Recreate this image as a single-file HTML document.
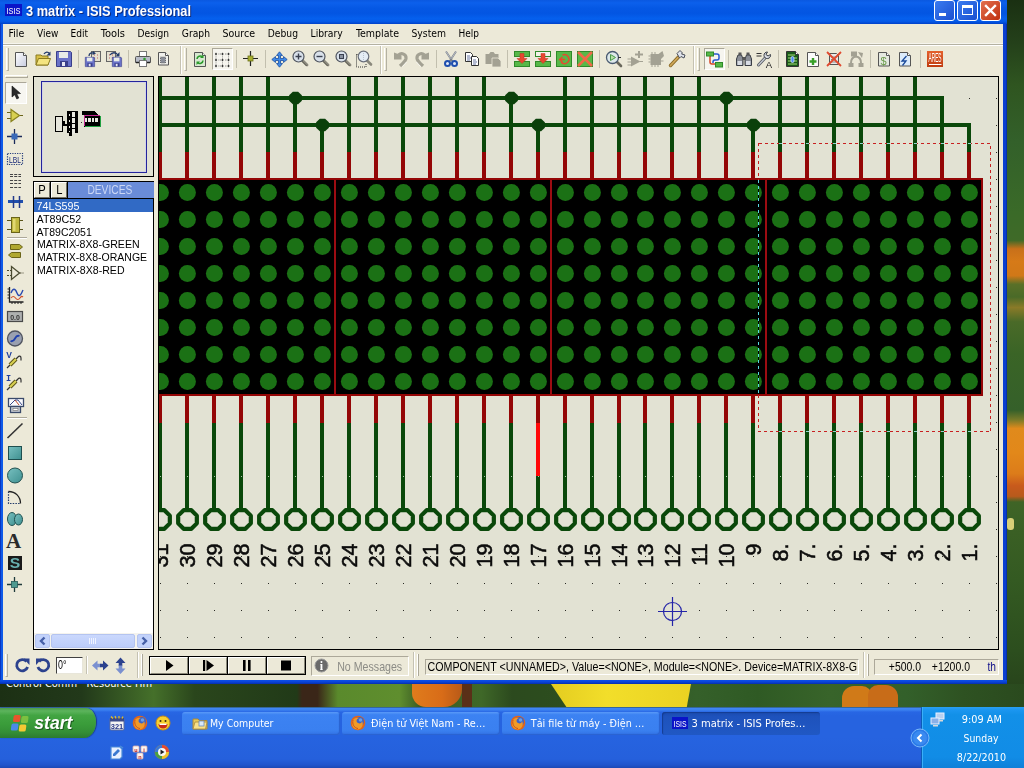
<!DOCTYPE html>
<html><head><meta charset="utf-8"><title>3 matrix - ISIS Professional</title>
<style>
html,body{margin:0;padding:0;}
body{width:1024px;height:768px;overflow:hidden;position:relative;background:#2b4a1b;font-family:"Liberation Sans","DejaVu Sans",sans-serif;font-size:11px;color:#000;}
.a{position:absolute;}
.t{position:absolute;white-space:nowrap;line-height:1;}
svg{position:absolute;overflow:visible;will-change:transform;}
.tah{font-family:"DejaVu Sans Condensed","DejaVu Sans","Liberation Sans",sans-serif;}
.sunk{border:1px solid;border-color:#aca899 #fff #fff #aca899;box-sizing:border-box;}
.rais{border:1px solid;border-color:#fff #716f64 #716f64 #fff;box-sizing:border-box;}
.tsep{position:absolute;width:1px;background:#c2bfae;top:50px;height:18px;}
.grip{position:absolute;width:3px;box-sizing:border-box;border-left:1px solid #fff;border-right:1px solid #b4b1a2;border-bottom:1px solid #b4b1a2;top:48px;height:23px;}
</style></head><body>

<div class="a" id="wall-r" style="left:1007px;top:0;width:17px;height:707px;background:linear-gradient(to bottom,#1a3012 0%,#24401a 6%,#2f5520 12%,#33602a 20%,#3a6a28 30%,#3f6a28 34%,#c8701a 35.200%,#d67a18 37%,#d07818 39%,#5a7028 40.200%,#4a6a28 42%,#8a7a28 43.500%,#4a6a28 45.500%,#3a6426 50%,#35602a 58%,#7a7a28 59.400%,#e08a1c 60.600%,#e2881a 64%,#dc7c1a 67%,#c85a1c 68.700%,#b85a1c 70.200%,#3f6426 71%,#3c6226 73.200%,#3a5f24 75.400%,#345a22 82%,#2c4e1e 92%,#263f1a 100%);"></div>
<div class="a" style="left:1007px;top:518px;width:7px;height:12px;background:#d8d078;border-radius:3px;"></div>
<div class="a" id="wall-b" style="left:0;top:684px;width:1024px;height:23px;background:linear-gradient(to right,#1c3014 0%,#22391a 8%,#45702a 15%,#2a461c 19%,#213a18 29%,#3a2618 29.500%,#3a2618 31%,#5a8a2c 33%,#5f8e2e 39%,#3a5c24 41%,#3f6828 47%,#2c4a1e 50%,#2c4c1e 53%,#2f5222 60%,#35602a 68%,#2f5a24 74%,#38642a 81%,#33602a 88.500%,#2e5222 94%,#2a4a1e 100%);"></div>
<div class="a" style="left:551px;top:684px;width:140px;height:23px;background:linear-gradient(to right,#e4cc20,#f2de2a 40%,#ead222 100%);clip-path:polygon(0 0,100% 0,97% 100%,11% 100%);"></div>
<div class="a" style="left:842px;top:686px;width:30px;height:21px;background:#d07a18;border-radius:12px 10px 0 0;"></div>
<div class="a" style="left:868px;top:685px;width:30px;height:22px;background:#c86c18;border-radius:10px 12px 0 0;"></div>
<div class="a" style="left:412px;top:684px;width:50px;height:23px;background:linear-gradient(to right,#e07c1c,#d86c18 60%,#b85a18);border-radius:0 0 18px 14px;"></div>
<div class="a" style="left:462px;top:684px;width:10px;height:23px;background:#5a3018;"></div>
<div class="a" style="left:0;top:684px;width:160px;height:3px;overflow:hidden;"><div class="t tah" style="left:6px;top:-6px;font-size:11px;color:#fff;">Control Comm&nbsp;&nbsp; Resource Hm</div></div>
<div class="a" id="win" style="left:0;top:0;width:1007px;height:684px;background:#0a3fd0;"></div>
<div class="a" style="left:0;top:23px;width:1px;height:661px;background:#0a36c0;"></div>
<div class="a" style="left:1px;top:23px;width:2px;height:659px;background:#0f5ae8;"></div>
<div class="a" style="left:1006px;top:23px;width:1px;height:661px;background:#062fae;"></div>
<div class="a" style="left:0;top:680px;width:1007px;height:4px;background:linear-gradient(to bottom,#0b50ea,#0a44d8 50%,#062fae);"></div>
<div class="a" id="client" style="left:3px;top:24px;width:1000px;height:656px;background:#ece9d8;"></div>
<div class="a" id="title" style="left:0;top:0;width:1007px;height:24px;background:linear-gradient(to bottom,#0a58e0 0%,#0c60ec 12%,#0558e4 35%,#0355e2 55%,#0560ee 78%,#0458e6 90%,#0040c8 100%);"></div>
<div class="a" style="left:5px;top:4px;width:17px;height:12px;background:#0a14c8;"></div>
<svg style="left:5px;top:4px" width="17" height="12" viewBox="0 0 17 12"><text x="1.500" y="10" font-size="9.500" font-family="Liberation Sans, sans-serif" fill="#fff" textLength="14" lengthAdjust="spacingAndGlyphs">ISIS</text></svg>
<div class="a" style="left:934px;top:0px;width:21px;height:21px;box-sizing:border-box;border:1px solid #fff;border-radius:3px;background:linear-gradient(135deg,#3a7bf0,#1a4fd0);"></div>
<svg style="left:934px;top:0px" width="21" height="21" viewBox="0 0 21 21"><rect x="5" y="13" width="7" height="3" fill="#fff"/></svg>
<div class="a" style="left:957px;top:0px;width:21px;height:21px;box-sizing:border-box;border:1px solid #fff;border-radius:3px;background:linear-gradient(135deg,#3a7bf0,#1a4fd0);"></div>
<svg style="left:957px;top:0px" width="21" height="21" viewBox="0 0 21 21"><rect x="5.5" y="6.5" width="10" height="8" fill="none" stroke="#fff" stroke-width="1"/><rect x="5" y="5" width="11" height="3" fill="#fff"/></svg>
<div class="a" style="left:980px;top:0px;width:21px;height:21px;box-sizing:border-box;border:1px solid #fff;border-radius:3px;background:linear-gradient(135deg,#e27050,#c0300e);"></div>
<svg style="left:980px;top:0px" width="21" height="21" viewBox="0 0 21 21"><path d="M6 6L15 15M15 6L6 15" stroke="#fff" stroke-width="2.4" stroke-linecap="square"/></svg>
<div class="a" style="left:3px;top:43px;width:1000px;height:1px;background:#f6f5ee;"></div>
<div class="a" style="left:3px;top:44px;width:1000px;height:1px;background:#b4b1a2;"></div>
<div class="a" style="left:3px;top:45px;width:1000px;height:1px;background:#fff;"></div>
<div class="grip" style="left:6px"></div>
<svg style="left:13px;top:51px" width="16" height="16" viewBox="0 0 16 16"><defs><linearGradient id="gnew" x1="0" y1="0" x2="1" y2="1"><stop offset="0" stop-color="#fff"/><stop offset="1" stop-color="#c8cce0"/></linearGradient></defs><path d="M2.500 1.500h8l3 3v11h-11z" fill="url(#gnew)" stroke="#555" stroke-width="1"/><path d="M10.500 1.500v3h3" fill="#fff" stroke="#555" stroke-width="1"/></svg>
<svg style="left:35px;top:50px" width="16" height="16" viewBox="0 0 16 16"><path d="M1 5h5l1 1h6v9H1z" fill="#d8c048" stroke="#8a7a20" stroke-width="1"/><path d="M3.500 8.500h12l-2.500 6.500H1z" fill="#f4e480" stroke="#8a7a20" stroke-width="1"/><path d="M9 4c1.500-2.500 4-2.500 5.500-0.500" fill="none" stroke="#223a6a" stroke-width="1.300"/><path d="M15.500 1.500v4h-4z" fill="#223a6a"/></svg>
<svg style="left:56px;top:51px" width="16" height="16" viewBox="0 0 16 16"><path d="M0.500 0.500h14l1 1v14h-15z" fill="#6a72c8" stroke="#3a3f8a" stroke-width="1"/><rect x="3" y="1" width="9" height="6" fill="#e8ece8"/><rect x="4" y="10" width="8" height="5.500" fill="#3a3f8a"/><rect x="6" y="11" width="3" height="4" fill="#e8e8f4"/></svg>
<div class="tsep" style="left:78px"></div>
<svg style="left:85px;top:51px" width="16" height="16" viewBox="0 0 16 16"><rect x="6.500" y="0.500" width="9" height="10" fill="#e4e0d0" stroke="#666" stroke-width="1"/><path d="M9 4h1M12 4h1M9 7h1M12 7h1" stroke="#c06060" stroke-width="1"/><g transform="translate(0,6) scale(0.62)"><path d="M0.500 0.500h14l1 1v14h-15z" fill="#6a72c8" stroke="#3a3f8a" stroke-width="1"/><rect x="3" y="1" width="9" height="6" fill="#e8ece8"/><rect x="4" y="10" width="8" height="5.500" fill="#3a3f8a"/><rect x="6" y="11" width="3" height="4" fill="#e8e8f4"/></g><path d="M4 5c0-3 3-3.500 5-3" fill="none" stroke="#223a6a" stroke-width="1.300"/><path d="M8 0l3 2.500l-3.500 1.500z" fill="#223a6a"/></svg>
<svg style="left:106px;top:51px" width="16" height="16" viewBox="0 0 16 16"><rect x="0.500" y="0.500" width="9" height="10" fill="#e4e0d0" stroke="#666" stroke-width="1"/><path d="M3 4h1M6 4h1M3 7h1M6 7h1" stroke="#c06060" stroke-width="1"/><g transform="translate(6,6) scale(0.62)"><path d="M0.500 0.500h14l1 1v14h-15z" fill="#6a72c8" stroke="#3a3f8a" stroke-width="1"/><rect x="3" y="1" width="9" height="6" fill="#e8ece8"/><rect x="4" y="10" width="8" height="5.500" fill="#3a3f8a"/><rect x="6" y="11" width="3" height="4" fill="#e8e8f4"/></g><path d="M4 4c2-3 6-3 8 0" fill="none" stroke="#223a6a" stroke-width="1.300"/><path d="M13.500 1v4.500h-4z" fill="#223a6a"/></svg>
<div class="tsep" style="left:128px"></div>
<svg style="left:135px;top:51px" width="16" height="16" viewBox="0 0 16 16"><rect x="4.500" y="0.500" width="7" height="5" fill="#fff" stroke="#777" stroke-width="1"/><path d="M1.500 5.500h13a1 1 0 0 1 1 1v5h-15v-5a1 1 0 0 1 1-1z" fill="#b8bcc8" stroke="#555" stroke-width="1"/><rect x="4.500" y="9.500" width="7" height="6" fill="#fff" stroke="#777" stroke-width="1"/><path d="M1 11.500h3M12 11.500h3" stroke="#222" stroke-width="1.500"/><circle cx="9.500" cy="8" r="1.300" fill="#30a030"/></svg>
<svg style="left:156px;top:51px" width="16" height="16" viewBox="0 0 16 16"><path d="M2.500 1.500h7l3 3v9.500h-10z" fill="#f0f0ec" stroke="#555" stroke-width="1"/><path d="M9.500 1.500v3h3" fill="#fff" stroke="#555" stroke-width="1"/><rect x="4.500" y="6" width="5" height="6" fill="#8a8e98"/><path d="M4.500 6h5v6h-5z" fill="none" stroke="#555" stroke-width="0.800" stroke-dasharray="1 1"/></svg>
<div class="a" style="left:180px;top:46px;width:1px;height:28px;background:#c5c2b2;border-right:1px solid #fff;"></div>
<div class="grip" style="left:184px"></div>
<svg style="left:192px;top:51px" width="16" height="16" viewBox="0 0 16 16"><path d="M2.500 1.500h8l3 3v11h-11z" fill="#d8e8d0" stroke="#555" stroke-width="1"/><path d="M10.500 1.500v3h3" fill="#fff" stroke="#555" stroke-width="1"/><path d="M5 8a3.200 3.200 0 0 1 5.500-2" fill="none" stroke="#2a9a2a" stroke-width="1.600"/><path d="M11.500 3.500v3.500h-3.500z" fill="#2a9a2a"/><path d="M11 9.500a3.200 3.200 0 0 1-5.500 2" fill="none" stroke="#2a9a2a" stroke-width="1.600"/><path d="M4.500 14v-3.500h3.500z" fill="#2a9a2a"/></svg>
<div class="a" style="left:212px;top:48px;width:21px;height:22px;box-sizing:border-box;background:#f6f5ef;border:1px solid;border-color:#aca899 #fff #fff #aca899;"></div>
<svg style="left:214px;top:51px" width="17" height="17" viewBox="0 0 17 17"><g fill="#333"><path d="M2 1.5l1.200 1.500l-1.200 1.500l-1.200-1.500z"/><path d="M2 7.5l1.200 1.500l-1.200 1.500l-1.200-1.500z"/><path d="M2 13.5l1.200 1.500l-1.200 1.500l-1.200-1.500z"/><path d="M8.5 1.5l1.200 1.500l-1.200 1.500l-1.200-1.500z"/><path d="M8.5 7.5l1.200 1.500l-1.200 1.500l-1.200-1.500z"/><path d="M8.5 13.5l1.200 1.500l-1.200 1.500l-1.200-1.500z"/><path d="M14.5 1.5l1.200 1.500l-1.200 1.500l-1.200-1.500z"/><path d="M14.5 7.5l1.200 1.500l-1.200 1.500l-1.200-1.500z"/><path d="M14.5 13.5l1.200 1.500l-1.200 1.500l-1.200-1.500z"/></g><path d="M4.500 3h2.500M11 3h2M4.500 9h2.500M11 9h2M4.500 15h2.500M11 15h2M2 5.500v2M2 11.500v2M8.500 5.500v2M8.500 11.500v2M14.500 5.500v2M14.500 11.500v2" stroke="#555" stroke-width="0.800" stroke-dasharray="0.800 0.800"/></svg>
<div class="tsep" style="left:236px"></div>
<svg style="left:242px;top:50px" width="17" height="17" viewBox="0 0 17 17"><path d="M8.500 1v15M1 8.500h15" stroke="#222" stroke-width="1.200"/><rect x="6" y="6" width="5" height="5" fill="#a8b030" stroke="#6a7018" stroke-width="0.800"/></svg>
<div class="tsep" style="left:265px"></div>
<svg style="left:271px;top:51px" width="17" height="17" viewBox="0 0 17 17"><path d="M8.500 0.800L11.500 4.500H9.500V7.500H12.500V5.500L16.200 8.500L12.500 11.500V9.500H9.500V12.500H11.500L8.500 16.200L5.500 12.500H7.500V9.500H4.500V11.500L0.800 8.500L4.500 5.500V7.500H7.500V4.500H5.500Z" fill="#3f8ae8" stroke="#1d4f9e" stroke-width="0.800" stroke-linejoin="round"/></svg>
<svg style="left:292px;top:50px" width="16" height="16" viewBox="0 0 16 16"><path d="M10 10l5 5" stroke="#8a887c" stroke-width="2.800" stroke-linecap="round"/><path d="M10 10l5 5" stroke="#55534a" stroke-width="1" stroke-linecap="round" transform="translate(-0.700,0.700)"/><circle cx="6.500" cy="6.500" r="5.500" fill="#d8e0ea" stroke="#50555f" stroke-width="1.200"/><path d="M3.500 6.500h6M6.500 3.500v6" stroke="#3a4050" stroke-width="1.400"/></svg>
<svg style="left:313px;top:50px" width="16" height="16" viewBox="0 0 16 16"><path d="M10 10l5 5" stroke="#8a887c" stroke-width="2.800" stroke-linecap="round"/><path d="M10 10l5 5" stroke="#55534a" stroke-width="1" stroke-linecap="round" transform="translate(-0.700,0.700)"/><circle cx="6.500" cy="6.500" r="5.500" fill="#d8e0ea" stroke="#50555f" stroke-width="1.200"/><path d="M3.500 6.500h6" stroke="#3a4050" stroke-width="1.400"/></svg>
<svg style="left:335px;top:50px" width="16" height="16" viewBox="0 0 16 16"><path d="M10 10l5 5" stroke="#8a887c" stroke-width="2.800" stroke-linecap="round"/><path d="M10 10l5 5" stroke="#55534a" stroke-width="1" stroke-linecap="round" transform="translate(-0.700,0.700)"/><circle cx="6.500" cy="6.500" r="5.500" fill="#d8e0ea" stroke="#50555f" stroke-width="1.200"/><rect x="4.500" y="4.500" width="4" height="4" fill="#8a92a0" stroke="#3a4050" stroke-width="1"/></svg>
<svg style="left:355px;top:50px" width="18" height="18" viewBox="0 0 18 18"><path d="M1.500 4.500v12.500h9.500v-4" fill="none" stroke="#333" stroke-width="1" stroke-dasharray="1 1"/><path d="M1.500 4.500h2.500" fill="none" stroke="#333" stroke-width="1" stroke-dasharray="1 1"/><path d="M12 10.500l4 4" stroke="#8a887c" stroke-width="2.600" stroke-linecap="round"/><circle cx="8.500" cy="6.500" r="5.300" fill="#e4ecf4" stroke="#6a6f7a" stroke-width="1.200"/><path d="M8.500 3v7" stroke="#b8c0cc" stroke-width="1" stroke-dasharray="1 1"/></svg>
<div class="a" style="left:380px;top:46px;width:1px;height:28px;background:#c5c2b2;border-right:1px solid #fff;"></div>
<div class="grip" style="left:384px"></div>
<svg style="left:393px;top:51px" width="16" height="16" viewBox="0 0 16 16"><path d="M1 1.500V8.500H8.500V4.500L5 3z" fill="#a3a193"/><path d="M5.500 4C8.500 1.500 13.500 3 13 7.500C12.500 10.500 10 12 7 15" fill="none" stroke="#a3a193" stroke-width="3.200"/><path d="M9.500 15.500l4-4.500" stroke="#fff" stroke-width="1" opacity="0.700"/></svg>
<svg style="left:414px;top:51px" width="16" height="16" viewBox="0 0 16 16"><g transform="translate(16,0) scale(-1,1)"><path d="M1 1.500V8.500H8.500V4.500L5 3z" fill="#a3a193"/><path d="M5.500 4C8.500 1.500 13.500 3 13 7.500C12.500 10.500 10 12 7 15" fill="none" stroke="#a3a193" stroke-width="3.200"/><path d="M9.500 15.500l4-4.500" stroke="#fff" stroke-width="1" opacity="0.700"/></g></svg>
<div class="tsep" style="left:436px"></div>
<svg style="left:443px;top:51px" width="16" height="16" viewBox="0 0 16 16"><path d="M3 0.500l6.500 10M13 0.500l-6.500 10" stroke="#7a8088" stroke-width="1.800"/><path d="M3 0.500l4.500 7M13 0.500l-4.500 7" stroke="#c8ccd4" stroke-width="0.800"/><circle cx="4.500" cy="12.500" r="2.500" fill="#dfe8f8" stroke="#1f4fae" stroke-width="2"/><circle cx="11.500" cy="12.500" r="2.500" fill="#dfe8f8" stroke="#1f4fae" stroke-width="2"/></svg>
<svg style="left:464px;top:51px" width="16" height="16" viewBox="0 0 16 16"><path d="M1.500 1.500h5l2 2v7h-7z" fill="#fff" stroke="#333" stroke-width="1"/><path d="M3 5h3M3 7h4M3 9h3" stroke="#5a6a9a" stroke-width="0.900"/><path d="M7.500 5.500h5l2 2v7h-7z" fill="#fff" stroke="#333" stroke-width="1"/><path d="M9 9h3M9 11h4M9 13h3" stroke="#5a6a9a" stroke-width="0.900"/></svg>
<svg style="left:485px;top:51px" width="16" height="16" viewBox="0 0 16 16"><path d="M0.500 3h3.500l1.500-2h3l1.500 2h3.500v10h-13z" fill="#a3a193"/><path d="M7 7h6l3 3v6h-9z" fill="#a3a193" stroke="#ece9d8" stroke-width="0.800"/></svg>
<div class="tsep" style="left:507px"></div>
<svg style="left:514px;top:51px" width="16" height="16" viewBox="0 0 16 16"><rect x="0.500" y="0.500" width="15" height="5" fill="#58b848" stroke="#2f8a2a"/><rect x="0.500" y="10.500" width="15" height="5" fill="#58b848" stroke="#2f8a2a"/><path d="M6 2.500h4v5h3l-5 5l-5-5h3z" fill="#e84830" stroke="#c03020" stroke-width="0.500"/></svg>
<svg style="left:535px;top:51px" width="16" height="16" viewBox="0 0 16 16"><rect x="0.500" y="0.500" width="15" height="5" fill="#f4f2e8" stroke="#2f8a2a"/><rect x="0.500" y="10.500" width="15" height="5" fill="#58b848" stroke="#2f8a2a"/><path d="M6 2.500h4v5h3l-5 5l-5-5h3z" fill="#e84830" stroke="#c03020" stroke-width="0.500"/></svg>
<svg style="left:556px;top:51px" width="16" height="16" viewBox="0 0 16 16"><rect x="0.500" y="0.500" width="15" height="15" fill="#58b848" stroke="#2f8a2a"/><path d="M6.500 4a4.500 4.500 0 1 1-1.500 7" fill="none" stroke="#e84830" stroke-width="1.400"/><path d="M3 8.500h6M6.500 6l-3 2.500l3 2.500" fill="none" stroke="#e84830" stroke-width="1.300"/></svg>
<svg style="left:577px;top:51px" width="16" height="16" viewBox="0 0 16 16"><rect x="0.500" y="0.500" width="15" height="15" fill="#58b848" stroke="#2f8a2a"/><path d="M1 1l14 14M15 1l-14 14" stroke="#f06848" stroke-width="2.600"/></svg>
<div class="tsep" style="left:599px"></div>
<svg style="left:605px;top:50px" width="18" height="18" viewBox="0 0 18 18"><path d="M11 11l5 5" stroke="#6a685c" stroke-width="2.600" stroke-linecap="round"/><circle cx="7.500" cy="7.500" r="6" fill="#dde8ea" stroke="#4a5a70" stroke-width="1.300"/><path d="M5.500 4.500v6l5-3z" fill="#b8e0a8" stroke="#4a9a4a" stroke-width="1"/><path d="M13 7.500h3" stroke="#333" stroke-width="1"/></svg>
<svg style="left:627px;top:51px" width="16" height="16" viewBox="0 0 16 16"><path d="M4 5.500v10l9.500-5z" fill="#a3a193"/><path d="M0.500 8h3.500M0.500 11h3.500M0.500 14h3.500M13 10.500h3" stroke="#a3a193" stroke-width="1"/><path d="M8 3.500h8M12 0v7" stroke="#a3a193" stroke-width="2"/></svg>
<svg style="left:648px;top:51px" width="16" height="16" viewBox="0 0 16 16"><path d="M2.500 3h8l4-3l1.500 5l-3 3v6h-10.500z" fill="#a3a193"/><path d="M0.500 5h2M0.500 8h2M0.500 11h2M13 10h2.500M4 14v2M7 14v2M10 14v2M4 1v2M7 1v2" stroke="#a3a193" stroke-width="1"/></svg>
<svg style="left:669px;top:50px" width="17" height="17" viewBox="0 0 17 17"><path d="M1.500 15.500l8-8.500" stroke="#8a6a28" stroke-width="3.400" stroke-linecap="round"/><path d="M1.500 15.500l8-8.500" stroke="#d0a858" stroke-width="1.800" stroke-linecap="round"/><path d="M8 3.500l3-3l2.500 2.500l-1 1l3.500 1l-1 3l-3-1.500l-1.500 1.500z" fill="#e0e4ec" stroke="#4a4f5a" stroke-width="1"/></svg>
<div class="a" style="left:693px;top:46px;width:1px;height:28px;background:#c5c2b2;border-right:1px solid #fff;"></div>
<div class="grip" style="left:697px"></div>
<div class="a" style="left:704px;top:48px;width:21px;height:22px;box-sizing:border-box;background:#f6f5ef;border:1px solid;border-color:#aca899 #fff #fff #aca899;"></div>
<svg style="left:706px;top:51px" width="18" height="17" viewBox="0 0 18 17"><path d="M8 3h3a2 2 0 0 1 2 2v2a2 2 0 0 1-2 2H9a2 2 0 0 0-2 2v1" fill="none" stroke="#2a5ad0" stroke-width="1.500"/><path d="M8 4H6a2 2 0 0 0-2 2v5a2 2 0 0 0 2 2h4" fill="none" stroke="#d84828" stroke-width="1.500"/><rect x="0.500" y="1" width="7" height="4" fill="#58b848" stroke="#2f8a2a"/><rect x="9.500" y="11.500" width="7" height="4.500" fill="#58b848" stroke="#2f8a2a"/></svg>
<div class="tsep" style="left:728px"></div>
<svg style="left:736px;top:51px" width="16" height="16" viewBox="0 0 16 16"><path d="M2 4h3.500l1.500 4v6.500H0.500V8z" fill="#8a8e96" stroke="#3a3e46" stroke-width="1"/><path d="M10.500 4H14l1.500 4v6.500H9V8z" fill="#8a8e96" stroke="#3a3e46" stroke-width="1"/><rect x="2.500" y="1.500" width="3" height="2.500" fill="#555" /><rect x="10.500" y="1.500" width="3" height="2.500" fill="#555"/><rect x="6.500" y="6" width="3" height="3" fill="#555"/><rect x="1.500" y="10" width="4.500" height="4" fill="#d8dce4"/><rect x="10" y="10" width="4.500" height="4" fill="#d8dce4"/></svg>
<svg style="left:756px;top:51px" width="17" height="17" viewBox="0 0 17 17"><path d="M0.500 2.500h5M0.500 5h5" stroke="#333" stroke-width="1.200"/><path d="M2.500 14l8-8.500" stroke="#555a62" stroke-width="3" stroke-linecap="round"/><path d="M2.500 14l8-8.500" stroke="#c8ccd4" stroke-width="1.200" stroke-linecap="round"/><path d="M14.500 3.500a3.300 3.300 0 1 1-3-2.500l-1.500 2.500l2 1.500z" fill="#d8dce4" stroke="#3a3e46" stroke-width="1"/><text x="13" y="16.500" font-size="9.500" font-family="Liberation Sans, sans-serif" text-anchor="middle" fill="#222">A</text></svg>
<div class="tsep" style="left:778px"></div>
<svg style="left:785px;top:51px" width="16" height="16" viewBox="0 0 16 16"><path d="M1.500 0.500h9l3 3v12h-12z" fill="#1a5a1a" stroke="#333" stroke-width="1"/><path d="M10.500 0.500v3h3" fill="#fff" stroke="#333" stroke-width="1"/><path d="M3 4h7M3 7h9M3 10h9M3 13h9" stroke="#a8e078" stroke-width="1.200"/><rect x="6" y="5.500" width="3" height="6" rx="1.500" fill="#4a8af0" stroke="#cfe0ff" stroke-width="0.800"/></svg>
<svg style="left:805px;top:51px" width="16" height="16" viewBox="0 0 16 16"><path d="M2.500 1.500h8l3 3v11h-11z" fill="#fbfbfb" stroke="#555" stroke-width="1"/><path d="M10.500 1.500v3h3" fill="#fff" stroke="#555" stroke-width="1"/><path d="M4.500 10.500h7M8 7v7" stroke="#38a028" stroke-width="2.400"/></svg>
<svg style="left:826px;top:51px" width="17" height="17" viewBox="0 0 17 17"><path d="M3.500 2.500h7l2 2v9h-9z" fill="#e8e8e8" stroke="#555" stroke-width="1"/><path d="M5 6h5M5 8.500h5M5 11h5" stroke="#888" stroke-width="1"/><path d="M1 1l14 14M15 1l-14 14" stroke="#e04a30" stroke-width="1.800"/></svg>
<svg style="left:848px;top:51px" width="16" height="16" viewBox="0 0 16 16"><rect x="3" y="0.500" width="6" height="5" fill="#a3a193"/><rect x="0.500" y="12" width="5" height="4" fill="#a3a193"/><rect x="10.500" y="12" width="5" height="4" fill="#a3a193"/><path d="M3 12c0-4 2-6 5-6.500M8 5.500c3 0.500 5 2.500 5 6.500" fill="none" stroke="#a3a193" stroke-width="2"/><path d="M10 1l5 1l-1 5z" fill="#a3a193"/></svg>
<div class="tsep" style="left:870px"></div>
<svg style="left:876px;top:51px" width="16" height="16" viewBox="0 0 16 16"><path d="M2.500 1.500h8l3 3v10.500h-11z" fill="#e4e8e0" stroke="#555" stroke-width="1"/><path d="M10.500 1.500v3h3" fill="#fff" stroke="#555" stroke-width="1"/><text x="7.500" y="13.500" font-size="11" font-family="Liberation Sans, sans-serif" text-anchor="middle" fill="#6a9a4a">$</text></svg>
<svg style="left:897px;top:51px" width="16" height="16" viewBox="0 0 16 16"><path d="M2.500 1.500h8l3 3v10.500h-11z" fill="#dcecfc" stroke="#555" stroke-width="1"/><path d="M10.500 1.500v3h3" fill="#fff" stroke="#555" stroke-width="1"/><path d="M9.500 5l-4.500 5h4l-3.500 4.500" fill="none" stroke="#1a4a9a" stroke-width="1.300"/></svg>
<div class="tsep" style="left:920px"></div>
<svg style="left:927px;top:51px" width="16" height="16" viewBox="0 0 16 16"><defs><linearGradient id="gares" x1="0" y1="0" x2="0" y2="1"><stop offset="0" stop-color="#e4602c"/><stop offset="1" stop-color="#c03c10"/></linearGradient></defs><rect x="0" y="0" width="16" height="16" fill="url(#gares)"/><text transform="translate(1.500,11) scale(1,1.600)" x="0" y="0" font-size="8" font-family="Liberation Sans, sans-serif" fill="#fff" textLength="13" lengthAdjust="spacingAndGlyphs">ARES</text><path d="M2 13.500h12.500" fill="none" stroke="#fff" stroke-width="1"/></svg>
<div class="a" style="left:5px;top:75px;width:23px;height:2px;border:1px solid;border-color:#fff #aca899 #aca899 #fff;box-sizing:border-box;height:3px;"></div>
<div class="a" style="left:5px;top:82px;width:22px;height:22px;box-sizing:border-box;background:#f7f6f1;border:1px solid;border-color:#aca899 #fff #fff #aca899;"></div>
<svg style="left:6px;top:83px" width="18" height="18" viewBox="0 0 18 18"><path d="M6 3v11l2.800-2.300l2 4.300l2-1l-2-4.200l3.700-0.300z" fill="#2a2a2a" stroke="#111" stroke-width="0.600"/></svg>
<svg style="left:6px;top:106px" width="18" height="18" viewBox="0 0 18 18"><path d="M1 6.500h4M1 12.500h4M13 9.500h4" stroke="#6a6418" stroke-width="1.200"/><path d="M5 3.500v12l8.500-6z" fill="#d8d050" stroke="#8a8420" stroke-width="1.200"/></svg>
<svg style="left:6px;top:128px" width="18" height="18" viewBox="0 0 18 18"><path d="M8.500 1v15M1 8.500h15" stroke="#1a2a5a" stroke-width="1.300"/><rect x="5.500" y="5.500" width="6" height="6" fill="#3a6ab8"/></svg>
<svg style="left:6px;top:150px" width="18" height="18" viewBox="0 0 18 18"><rect x="1.500" y="3.500" width="15" height="11" fill="none" stroke="#223a7a" stroke-width="1.200" stroke-dasharray="1.200 1.200"/><text x="9" y="13" font-size="9.500" font-family="Liberation Sans, sans-serif" text-anchor="middle" fill="#1a2a7a" textLength="12" lengthAdjust="spacingAndGlyphs">LBL</text></svg>
<svg style="left:6px;top:171px" width="18" height="18" viewBox="0 0 18 18"><path d="M4 3.500h11M4 5.500h11M4 9.500h11M4 12.500h11M4 16.500h11" stroke="#444" stroke-width="1.200" stroke-dasharray="3 1.200"/></svg>
<svg style="left:6px;top:194px" width="18" height="18" viewBox="0 0 18 18"><path d="M2 7.500h15" stroke="#1f4fae" stroke-width="3"/><path d="M7.500 2v12M13.500 2v12" stroke="#223a8a" stroke-width="1.500"/></svg>
<svg style="left:6px;top:216px" width="18" height="18" viewBox="0 0 18 18"><path d="M1 4.500h16M1 13.500h16" stroke="#5a5418" stroke-width="1.200"/><rect x="5.500" y="1.500" width="8" height="15" fill="#c0b840" stroke="#6a6418" stroke-width="1"/><rect x="7" y="3" width="2.500" height="12" fill="#e0d870"/></svg>
<div class="a" style="left:7px;top:237px;width:20px;height:1px;background:#aca899;border-bottom:1px solid #fff;"></div>
<svg style="left:6px;top:241px" width="18" height="18" viewBox="0 0 18 18"><path d="M4.500 3.500h9l3 2.500l-3 2.500h-9z" fill="#b0a830" stroke="#6a6418" stroke-width="1"/><path d="M14.500 11.500h-9l-3 2.500l3 2.500h9z" fill="#b0a830" stroke="#6a6418" stroke-width="1"/></svg>
<svg style="left:6px;top:263px" width="18" height="18" viewBox="0 0 18 18"><path d="M5.500 3.500v13l8-6.500z" fill="none" stroke="#4a4a30" stroke-width="1.300"/><path d="M1 7.500h4.500M1 12.500h4.500M13.500 10h4" stroke="#4a4a30" stroke-width="1.200" stroke-dasharray="2 1"/></svg>
<svg style="left:6px;top:286px" width="19" height="19" viewBox="0 0 19 19"><path d="M3.500 1v15h14" fill="none" stroke="#222" stroke-width="1.300"/><path d="M1.500 3h2M1.500 6h2M1.500 9h2M1.500 12h2M6 16v2M9 16v2M12 16v2M15 16v2" stroke="#222" stroke-width="1"/><path d="M5 7c2-5 4-5 6 0s4 2 6-3" fill="none" stroke="#2a4ab0" stroke-width="1.400"/><path d="M5 12c1.500-2 3-2 4.500 0s3 2 4.500 0s2-2 3-1" fill="none" stroke="#d0502a" stroke-width="1.200"/></svg>
<svg style="left:6px;top:308px" width="18" height="18" viewBox="0 0 18 18"><rect x="1.500" y="3.500" width="15" height="10" fill="#aeb0b0" stroke="#4a4a4a" stroke-width="1.200"/><text x="9" y="11.500" font-size="7" font-weight="bold" font-family="Liberation Sans, sans-serif" text-anchor="middle" fill="#333">0.0</text></svg>
<svg style="left:6px;top:329px" width="19" height="19" viewBox="0 0 19 19"><circle cx="9" cy="9.500" r="7.500" fill="#9aa0b0" stroke="#50545f" stroke-width="1.300"/><path d="M4.500 12c2.500 1 3.500-0.500 4.500-2.500s2-3.500 4.500-2.500" fill="none" stroke="#1f3fae" stroke-width="1.800"/></svg>
<svg style="left:5px;top:351px" width="19" height="19" viewBox="0 0 19 19"><path d="M2 17l3-3" stroke="#333" stroke-width="1.200"/><path d="M5 14l6-6" stroke="#5a5418" stroke-width="4" stroke-linecap="butt"/><path d="M5 14l6-6" stroke="#d8d050" stroke-width="2.200"/><path d="M11 8l2-2c1-1.500 3-1 3 1v2.500" fill="none" stroke="#333" stroke-width="1.200"/><text x="4" y="7" font-size="8.500" font-weight="bold" font-family="Liberation Sans, sans-serif" text-anchor="middle" fill="#1f3f9e">V</text></svg>
<svg style="left:5px;top:373px" width="19" height="19" viewBox="0 0 19 19"><path d="M2 17l3-3" stroke="#333" stroke-width="1.200"/><path d="M5 14l6-6" stroke="#5a5418" stroke-width="4" stroke-linecap="butt"/><path d="M5 14l6-6" stroke="#d8d050" stroke-width="2.200"/><path d="M11 8l2-2c1-1.500 3-1 3 1v2.500" fill="none" stroke="#333" stroke-width="1.200"/><text x="3.500" y="8" font-size="8.500" font-weight="bold" font-family="Liberation Mono, monospace" text-anchor="middle" fill="#1f3f9e">I</text></svg>
<svg style="left:6px;top:395px" width="20" height="20" viewBox="0 0 20 20"><rect x="2.500" y="3.500" width="15" height="8" fill="#fbfbff" stroke="#3a4a6a" stroke-width="1.300"/><path d="M4 10l5-5h3l4 5" fill="none" stroke="#3a4a8a" stroke-width="1"/><path d="M9 5l4 5" stroke="#c04a2a" stroke-width="1"/><rect x="4.500" y="11.500" width="10" height="6" fill="#c8ccd4" stroke="#3a4a6a" stroke-width="1.300"/><rect x="7" y="13.500" width="5" height="2" fill="#fff" stroke="#6a6a6a" stroke-width="0.600"/></svg>
<div class="a" style="left:7px;top:417px;width:20px;height:1px;background:#aca899;border-bottom:1px solid #fff;"></div>
<svg style="left:6px;top:421px" width="18" height="18" viewBox="0 0 18 18"><path d="M1.500 17l15-14.500" stroke="#333" stroke-width="1.600"/></svg>
<svg style="left:6px;top:444px" width="18" height="18" viewBox="0 0 18 18"><defs><linearGradient id="gt1" x1="0" y1="0" x2="1" y2="1"><stop offset="0" stop-color="#78c0c0"/><stop offset="1" stop-color="#3f9090"/></linearGradient></defs><rect x="2.500" y="2.500" width="13" height="13" fill="url(#gt1)" stroke="#1f4f4f" stroke-width="1"/></svg>
<svg style="left:6px;top:466px" width="19" height="19" viewBox="0 0 19 19"><defs><linearGradient id="gt2" x1="0" y1="0" x2="1" y2="1"><stop offset="0" stop-color="#78c0c0"/><stop offset="1" stop-color="#3f9090"/></linearGradient></defs><circle cx="9" cy="9.500" r="7.500" fill="url(#gt2)" stroke="#1f4f4f" stroke-width="1"/></svg>
<svg style="left:6px;top:488px" width="18" height="18" viewBox="0 0 18 18"><path d="M2.500 3.500v12h12" fill="none" stroke="#223a6a" stroke-width="1.200" stroke-dasharray="1.500 1.200"/><path d="M2.500 3.500c7 0 12 5 12 12" fill="none" stroke="#222" stroke-width="1.300"/></svg>
<svg style="left:6px;top:510px" width="19" height="19" viewBox="0 0 19 19"><defs><linearGradient id="gt3" x1="0" y1="0" x2="1" y2="1"><stop offset="0" stop-color="#78c0c0"/><stop offset="1" stop-color="#3f9090"/></linearGradient></defs><ellipse cx="6" cy="9" rx="4.500" ry="6.500" fill="url(#gt3)" stroke="#1f4f4f" stroke-width="1"/><ellipse cx="12.500" cy="9.500" rx="4" ry="5.500" fill="url(#gt3)" stroke="#1f4f4f" stroke-width="1"/></svg>
<div class="t" style="left:6px;top:531px;font-size:21px;font-weight:bold;font-family:'Liberation Serif',serif;color:#2a2a2a;">A</div>
<svg style="left:6px;top:554px" width="18" height="18" viewBox="0 0 18 18"><rect x="2" y="2" width="14" height="14" fill="#1a1a1a"/><text x="9" y="14.200" font-size="14" font-weight="bold" font-family="Liberation Sans, sans-serif" fill="#68b0b0" text-anchor="middle" textLength="10.500" lengthAdjust="spacingAndGlyphs">S</text></svg>
<svg style="left:6px;top:576px" width="18" height="18" viewBox="0 0 18 18"><path d="M8.500 1v15M1 8.500h15" stroke="#1f3a3a" stroke-width="1.300"/><rect x="5.500" y="5.500" width="6" height="6" fill="#4f9a90" stroke="#2a5a5a" stroke-width="0.800"/></svg>
<div class="a" style="left:33px;top:76px;width:121px;height:101px;box-sizing:border-box;border:1px solid #000;background:#e2e2d3;"></div>
<div class="a" style="left:41px;top:81px;width:106px;height:92px;box-sizing:border-box;border:1px solid #24249c;box-shadow:inset 0 0 0 1px #d4d4e6;"></div>
<svg style="left:33px;top:76px" width="122" height="101" viewBox="33 76 122 101" shape-rendering="crispEdges">
<rect x="55.5" y="116.5" width="7" height="15" fill="#e6e6dc" stroke="#000" stroke-width="1"/>
<path d="M63 121h2v3h3v2h-5z" fill="#000"/>
<rect x="67" y="111" width="11" height="22" fill="#000"/><rect x="69" y="133" width="3" height="3" fill="#000"/>
<rect x="72" y="112" width="3" height="5" fill="#e8e8e0"/><rect x="72" y="118" width="3" height="5" fill="#e8e8e0"/>
<rect x="72" y="124" width="3" height="4" fill="#e8e8e0"/><rect x="72" y="129" width="3" height="5" fill="#e8e8e0"/>
<rect x="69" y="114" width="1" height="2" fill="#e8e8e0"/><rect x="69" y="120" width="1" height="2" fill="#e8e8e0"/><rect x="69" y="126" width="1" height="2" fill="#e8e8e0"/><rect x="69" y="131" width="1" height="1" fill="#e8e8e0"/>
<path d="M82 111h13l3 4h-16z" fill="#000"/>
<rect x="84" y="115" width="16" height="12" fill="#000"/>
<path d="M84.5 126v-10.5h15" fill="none" stroke="#c02890" stroke-width="1"/>
<path d="M84.500 126.500h15.500v-11" fill="none" stroke="#20a040" stroke-width="1"/>
<rect x="85" y="118" width="2" height="4" fill="#e8e8e0"/><rect x="88" y="118" width="3" height="4" fill="#e8e8e0"/><rect x="92" y="118" width="2" height="4" fill="#e8e8e0"/><rect x="95" y="118" width="3" height="4" fill="#e8e8e0"/>
<rect x="81" y="122" width="1" height="1" fill="#333"/>
</svg>
<div class="a" style="left:33px;top:181px;width:121px;height:18px;background:#000;"></div>
<div class="a rais" style="left:34px;top:182px;width:16px;height:16px;background:#ece9d8;"></div>
<div class="a rais" style="left:51px;top:182px;width:16px;height:16px;background:#ece9d8;"></div>
<div class="a" style="left:68px;top:182px;width:86px;height:16px;background:#6a8cd8;"></div>
<div class="a" style="left:33px;top:198px;width:121px;height:452px;box-sizing:border-box;border:1px solid #000;background:#fff;"></div>
<div class="a" style="left:34px;top:199px;width:119px;height:13px;background:#316ac5;"></div>
<div class="a" style="left:34px;top:633px;width:119px;height:16px;background:#f4f3ee;"></div>
<div class="a" style="left:35px;top:634px;width:15px;height:14px;box-sizing:border-box;border:1px solid #b4c4f0;border-radius:2px;background:#c2d2fb;"></div>
<div class="a" style="left:137px;top:634px;width:15px;height:14px;box-sizing:border-box;border:1px solid #b4c4f0;border-radius:2px;background:#c2d2fb;"></div>
<div class="a" style="left:51px;top:634px;width:84px;height:14px;box-sizing:border-box;border:1px solid #b4c4f0;border-radius:2px;background:linear-gradient(to bottom,#cad8fd,#bccdfa);"></div>
<svg style="left:34px;top:633px" width="120" height="16" viewBox="34 633 120 16"><path d="M44.500 637.500l-3.500 3.500l3.500 3.500M142.500 637.500l3.500 3.500l-3.500 3.500" fill="none" stroke="#4660a8" stroke-width="2.400"/><path d="M89.500 638v6M91.500 638v6M93.500 638v6M95.500 638v6" stroke="#eef3ff" stroke-width="1"/></svg>
<div class="a" style="left:158px;top:76px;width:841px;height:574px;box-sizing:border-box;border:1px solid #000;background:#e2e2d3;"></div>
<svg id="cv" style="left:159px;top:77px;overflow:hidden" width="839" height="572" viewBox="159 77 839 572">
<path d="M160 98.5h1M160 125.5h1M160 152.5h1M160 179.5h1M160 206.5h1M160 233.5h1M160 260.5h1M160 287.5h1M160 314.5h1M160 341.5h1M160 368.5h1M160 395.5h1M160 422.5h1M160 449.5h1M160 476.5h1M160 502.5h1M160 529.5h1M160 556.5h1M160 583.5h1M160 610.5h1M160 637.5h1M187 98.5h1M187 125.5h1M187 152.5h1M187 179.5h1M187 206.5h1M187 233.5h1M187 260.5h1M187 287.5h1M187 314.5h1M187 341.5h1M187 368.5h1M187 395.5h1M187 422.5h1M187 449.5h1M187 476.5h1M187 502.5h1M187 529.5h1M187 556.5h1M187 583.5h1M187 610.5h1M187 637.5h1M214 98.5h1M214 125.5h1M214 152.5h1M214 179.5h1M214 206.5h1M214 233.5h1M214 260.5h1M214 287.5h1M214 314.5h1M214 341.5h1M214 368.5h1M214 395.5h1M214 422.5h1M214 449.5h1M214 476.5h1M214 502.5h1M214 529.5h1M214 556.5h1M214 583.5h1M214 610.5h1M214 637.5h1M241 98.5h1M241 125.5h1M241 152.5h1M241 179.5h1M241 206.5h1M241 233.5h1M241 260.5h1M241 287.5h1M241 314.5h1M241 341.5h1M241 368.5h1M241 395.5h1M241 422.5h1M241 449.5h1M241 476.5h1M241 502.5h1M241 529.5h1M241 556.5h1M241 583.5h1M241 610.5h1M241 637.5h1M268 98.5h1M268 125.5h1M268 152.5h1M268 179.5h1M268 206.5h1M268 233.5h1M268 260.5h1M268 287.5h1M268 314.5h1M268 341.5h1M268 368.5h1M268 395.5h1M268 422.5h1M268 449.5h1M268 476.5h1M268 502.5h1M268 529.5h1M268 556.5h1M268 583.5h1M268 610.5h1M268 637.5h1M295 98.5h1M295 125.5h1M295 152.5h1M295 179.5h1M295 206.5h1M295 233.5h1M295 260.5h1M295 287.5h1M295 314.5h1M295 341.5h1M295 368.5h1M295 395.5h1M295 422.5h1M295 449.5h1M295 476.5h1M295 502.5h1M295 529.5h1M295 556.5h1M295 583.5h1M295 610.5h1M295 637.5h1M322 98.5h1M322 125.5h1M322 152.5h1M322 179.5h1M322 206.5h1M322 233.5h1M322 260.5h1M322 287.5h1M322 314.5h1M322 341.5h1M322 368.5h1M322 395.5h1M322 422.5h1M322 449.5h1M322 476.5h1M322 502.5h1M322 529.5h1M322 556.5h1M322 583.5h1M322 610.5h1M322 637.5h1M349 98.5h1M349 125.5h1M349 152.5h1M349 179.5h1M349 206.5h1M349 233.5h1M349 260.5h1M349 287.5h1M349 314.5h1M349 341.5h1M349 368.5h1M349 395.5h1M349 422.5h1M349 449.5h1M349 476.5h1M349 502.5h1M349 529.5h1M349 556.5h1M349 583.5h1M349 610.5h1M349 637.5h1M376 98.5h1M376 125.5h1M376 152.5h1M376 179.5h1M376 206.5h1M376 233.5h1M376 260.5h1M376 287.5h1M376 314.5h1M376 341.5h1M376 368.5h1M376 395.5h1M376 422.5h1M376 449.5h1M376 476.5h1M376 502.5h1M376 529.5h1M376 556.5h1M376 583.5h1M376 610.5h1M376 637.5h1M403 98.5h1M403 125.5h1M403 152.5h1M403 179.5h1M403 206.5h1M403 233.5h1M403 260.5h1M403 287.5h1M403 314.5h1M403 341.5h1M403 368.5h1M403 395.5h1M403 422.5h1M403 449.5h1M403 476.5h1M403 502.5h1M403 529.5h1M403 556.5h1M403 583.5h1M403 610.5h1M403 637.5h1M430 98.5h1M430 125.5h1M430 152.5h1M430 179.5h1M430 206.5h1M430 233.5h1M430 260.5h1M430 287.5h1M430 314.5h1M430 341.5h1M430 368.5h1M430 395.5h1M430 422.5h1M430 449.5h1M430 476.5h1M430 502.5h1M430 529.5h1M430 556.5h1M430 583.5h1M430 610.5h1M430 637.5h1M457 98.5h1M457 125.5h1M457 152.5h1M457 179.5h1M457 206.5h1M457 233.5h1M457 260.5h1M457 287.5h1M457 314.5h1M457 341.5h1M457 368.5h1M457 395.5h1M457 422.5h1M457 449.5h1M457 476.5h1M457 502.5h1M457 529.5h1M457 556.5h1M457 583.5h1M457 610.5h1M457 637.5h1M484 98.5h1M484 125.5h1M484 152.5h1M484 179.5h1M484 206.5h1M484 233.5h1M484 260.5h1M484 287.5h1M484 314.5h1M484 341.5h1M484 368.5h1M484 395.5h1M484 422.5h1M484 449.5h1M484 476.5h1M484 502.5h1M484 529.5h1M484 556.5h1M484 583.5h1M484 610.5h1M484 637.5h1M511 98.5h1M511 125.5h1M511 152.5h1M511 179.5h1M511 206.5h1M511 233.5h1M511 260.5h1M511 287.5h1M511 314.5h1M511 341.5h1M511 368.5h1M511 395.5h1M511 422.5h1M511 449.5h1M511 476.5h1M511 502.5h1M511 529.5h1M511 556.5h1M511 583.5h1M511 610.5h1M511 637.5h1M538 98.5h1M538 125.5h1M538 152.5h1M538 179.5h1M538 206.5h1M538 233.5h1M538 260.5h1M538 287.5h1M538 314.5h1M538 341.5h1M538 368.5h1M538 395.5h1M538 422.5h1M538 449.5h1M538 476.5h1M538 502.5h1M538 529.5h1M538 556.5h1M538 583.5h1M538 610.5h1M538 637.5h1M565 98.5h1M565 125.5h1M565 152.5h1M565 179.5h1M565 206.5h1M565 233.5h1M565 260.5h1M565 287.5h1M565 314.5h1M565 341.5h1M565 368.5h1M565 395.5h1M565 422.5h1M565 449.5h1M565 476.5h1M565 502.5h1M565 529.5h1M565 556.5h1M565 583.5h1M565 610.5h1M565 637.5h1M592 98.5h1M592 125.5h1M592 152.5h1M592 179.5h1M592 206.5h1M592 233.5h1M592 260.5h1M592 287.5h1M592 314.5h1M592 341.5h1M592 368.5h1M592 395.5h1M592 422.5h1M592 449.5h1M592 476.5h1M592 502.5h1M592 529.5h1M592 556.5h1M592 583.5h1M592 610.5h1M592 637.5h1M619 98.5h1M619 125.5h1M619 152.5h1M619 179.5h1M619 206.5h1M619 233.5h1M619 260.5h1M619 287.5h1M619 314.5h1M619 341.5h1M619 368.5h1M619 395.5h1M619 422.5h1M619 449.5h1M619 476.5h1M619 502.5h1M619 529.5h1M619 556.5h1M619 583.5h1M619 610.5h1M619 637.5h1M645 98.5h1M645 125.5h1M645 152.5h1M645 179.5h1M645 206.5h1M645 233.5h1M645 260.5h1M645 287.5h1M645 314.5h1M645 341.5h1M645 368.5h1M645 395.5h1M645 422.5h1M645 449.5h1M645 476.5h1M645 502.5h1M645 529.5h1M645 556.5h1M645 583.5h1M645 610.5h1M645 637.5h1M672 98.5h1M672 125.5h1M672 152.5h1M672 179.5h1M672 206.5h1M672 233.5h1M672 260.5h1M672 287.5h1M672 314.5h1M672 341.5h1M672 368.5h1M672 395.5h1M672 422.5h1M672 449.5h1M672 476.5h1M672 502.5h1M672 529.5h1M672 556.5h1M672 583.5h1M672 610.5h1M672 637.5h1M699 98.5h1M699 125.5h1M699 152.5h1M699 179.5h1M699 206.5h1M699 233.5h1M699 260.5h1M699 287.5h1M699 314.5h1M699 341.5h1M699 368.5h1M699 395.5h1M699 422.5h1M699 449.5h1M699 476.5h1M699 502.5h1M699 529.5h1M699 556.5h1M699 583.5h1M699 610.5h1M699 637.5h1M726 98.5h1M726 125.5h1M726 152.5h1M726 179.5h1M726 206.5h1M726 233.5h1M726 260.5h1M726 287.5h1M726 314.5h1M726 341.5h1M726 368.5h1M726 395.5h1M726 422.5h1M726 449.5h1M726 476.5h1M726 502.5h1M726 529.5h1M726 556.5h1M726 583.5h1M726 610.5h1M726 637.5h1M753 98.5h1M753 125.5h1M753 152.5h1M753 179.5h1M753 206.5h1M753 233.5h1M753 260.5h1M753 287.5h1M753 314.5h1M753 341.5h1M753 368.5h1M753 395.5h1M753 422.5h1M753 449.5h1M753 476.5h1M753 502.5h1M753 529.5h1M753 556.5h1M753 583.5h1M753 610.5h1M753 637.5h1M780 98.5h1M780 125.5h1M780 152.5h1M780 179.5h1M780 206.5h1M780 233.5h1M780 260.5h1M780 287.5h1M780 314.5h1M780 341.5h1M780 368.5h1M780 395.5h1M780 422.5h1M780 449.5h1M780 476.5h1M780 502.5h1M780 529.5h1M780 556.5h1M780 583.5h1M780 610.5h1M780 637.5h1M807 98.5h1M807 125.5h1M807 152.5h1M807 179.5h1M807 206.5h1M807 233.5h1M807 260.5h1M807 287.5h1M807 314.5h1M807 341.5h1M807 368.5h1M807 395.5h1M807 422.5h1M807 449.5h1M807 476.5h1M807 502.5h1M807 529.5h1M807 556.5h1M807 583.5h1M807 610.5h1M807 637.5h1M834 98.5h1M834 125.5h1M834 152.5h1M834 179.5h1M834 206.5h1M834 233.5h1M834 260.5h1M834 287.5h1M834 314.5h1M834 341.5h1M834 368.5h1M834 395.5h1M834 422.5h1M834 449.5h1M834 476.5h1M834 502.5h1M834 529.5h1M834 556.5h1M834 583.5h1M834 610.5h1M834 637.5h1M861 98.5h1M861 125.5h1M861 152.5h1M861 179.5h1M861 206.5h1M861 233.5h1M861 260.5h1M861 287.5h1M861 314.5h1M861 341.5h1M861 368.5h1M861 395.5h1M861 422.5h1M861 449.5h1M861 476.5h1M861 502.5h1M861 529.5h1M861 556.5h1M861 583.5h1M861 610.5h1M861 637.5h1M888 98.5h1M888 125.5h1M888 152.5h1M888 179.5h1M888 206.5h1M888 233.5h1M888 260.5h1M888 287.5h1M888 314.5h1M888 341.5h1M888 368.5h1M888 395.5h1M888 422.5h1M888 449.5h1M888 476.5h1M888 502.5h1M888 529.5h1M888 556.5h1M888 583.5h1M888 610.5h1M888 637.5h1M915 98.5h1M915 125.5h1M915 152.5h1M915 179.5h1M915 206.5h1M915 233.5h1M915 260.5h1M915 287.5h1M915 314.5h1M915 341.5h1M915 368.5h1M915 395.5h1M915 422.5h1M915 449.5h1M915 476.5h1M915 502.5h1M915 529.5h1M915 556.5h1M915 583.5h1M915 610.5h1M915 637.5h1M942 98.5h1M942 125.5h1M942 152.5h1M942 179.5h1M942 206.5h1M942 233.5h1M942 260.5h1M942 287.5h1M942 314.5h1M942 341.5h1M942 368.5h1M942 395.5h1M942 422.5h1M942 449.5h1M942 476.5h1M942 502.5h1M942 529.5h1M942 556.5h1M942 583.5h1M942 610.5h1M942 637.5h1M969 98.5h1M969 125.5h1M969 152.5h1M969 179.5h1M969 206.5h1M969 233.5h1M969 260.5h1M969 287.5h1M969 314.5h1M969 341.5h1M969 368.5h1M969 395.5h1M969 422.5h1M969 449.5h1M969 476.5h1M969 502.5h1M969 529.5h1M969 556.5h1M969 583.5h1M969 610.5h1M969 637.5h1M996 98.5h1M996 125.5h1M996 152.5h1M996 179.5h1M996 206.5h1M996 233.5h1M996 260.5h1M996 287.5h1M996 314.5h1M996 341.5h1M996 368.5h1M996 395.5h1M996 422.5h1M996 449.5h1M996 476.5h1M996 502.5h1M996 529.5h1M996 556.5h1M996 583.5h1M996 610.5h1M996 637.5h1" stroke="#2a2a24" stroke-width="1" shape-rendering="crispEdges"/>
<path d="M158 76h4v76h-4zM158 423h4v86h-4zM185 76h4v76h-4zM185 423h4v86h-4zM212 76h4v76h-4zM212 423h4v86h-4zM239 76h4v76h-4zM239 423h4v86h-4zM266 76h4v76h-4zM266 423h4v86h-4zM293 96h4v56h-4zM293 423h4v86h-4zM320 123h4v29h-4zM320 423h4v86h-4zM347 76h4v76h-4zM347 423h4v86h-4zM374 76h4v76h-4zM374 423h4v86h-4zM401 76h4v76h-4zM401 423h4v86h-4zM428 76h4v76h-4zM428 423h4v86h-4zM455 76h4v76h-4zM455 423h4v86h-4zM482 76h4v76h-4zM482 423h4v86h-4zM509 96h4v56h-4zM509 423h4v86h-4zM536 123h4v29h-4zM536 423h4v86h-4zM563 76h4v76h-4zM563 423h4v86h-4zM590 76h4v76h-4zM590 423h4v86h-4zM617 76h4v76h-4zM617 423h4v86h-4zM643 76h4v76h-4zM643 423h4v86h-4zM670 76h4v76h-4zM670 423h4v86h-4zM697 76h4v76h-4zM697 423h4v86h-4zM724 96h4v56h-4zM724 423h4v86h-4zM751 123h4v29h-4zM751 423h4v86h-4zM778 76h4v76h-4zM778 423h4v86h-4zM805 76h4v76h-4zM805 423h4v86h-4zM832 76h4v76h-4zM832 423h4v86h-4zM859 76h4v76h-4zM859 423h4v86h-4zM886 76h4v76h-4zM886 423h4v86h-4zM913 76h4v76h-4zM913 423h4v86h-4zM940 96h4v56h-4zM940 423h4v86h-4zM967 123h4v29h-4zM967 423h4v86h-4zM158 96h784v4h-784zM158 123h811v4h-811z" fill="#0a480a" shape-rendering="crispEdges"/>
<polygon points="301.87,100.64 298.14,104.37 292.86,104.37 289.13,100.64 289.13,95.36 292.86,91.63 298.14,91.63 301.87,95.36" fill="#0a400a"/>
<polygon points="517.87,100.64 514.14,104.37 508.86,104.37 505.13,100.64 505.13,95.36 508.86,91.63 514.14,91.63 517.87,95.36" fill="#0a400a"/>
<polygon points="732.87,100.64 729.14,104.37 723.86,104.37 720.13,100.64 720.13,95.36 723.86,91.63 729.14,91.63 732.87,95.36" fill="#0a400a"/>
<polygon points="328.87,127.64 325.14,131.37 319.86,131.37 316.13,127.64 316.13,122.36 319.86,118.63 325.14,118.63 328.87,122.36" fill="#0a400a"/>
<polygon points="544.87,127.64 541.14,131.37 535.86,131.37 532.13,127.64 532.13,122.36 535.86,118.63 541.14,118.63 544.87,122.36" fill="#0a400a"/>
<polygon points="759.87,127.64 756.14,131.37 750.86,131.37 747.13,127.64 747.13,122.36 750.86,118.63 756.14,118.63 759.87,122.36" fill="#0a400a"/>
<path d="M158 152h4v28h-4zM158 394h4v29h-4zM185 152h4v28h-4zM185 394h4v29h-4zM212 152h4v28h-4zM212 394h4v29h-4zM239 152h4v28h-4zM239 394h4v29h-4zM266 152h4v28h-4zM266 394h4v29h-4zM293 152h4v28h-4zM293 394h4v29h-4zM320 152h4v28h-4zM320 394h4v29h-4zM347 152h4v28h-4zM347 394h4v29h-4zM374 152h4v28h-4zM374 394h4v29h-4zM401 152h4v28h-4zM401 394h4v29h-4zM428 152h4v28h-4zM428 394h4v29h-4zM455 152h4v28h-4zM455 394h4v29h-4zM482 152h4v28h-4zM482 394h4v29h-4zM509 152h4v28h-4zM509 394h4v29h-4zM536 152h4v28h-4zM536 394h4v29h-4zM563 152h4v28h-4zM563 394h4v29h-4zM590 152h4v28h-4zM590 394h4v29h-4zM617 152h4v28h-4zM617 394h4v29h-4zM643 152h4v28h-4zM643 394h4v29h-4zM670 152h4v28h-4zM670 394h4v29h-4zM697 152h4v28h-4zM697 394h4v29h-4zM724 152h4v28h-4zM724 394h4v29h-4zM751 152h4v28h-4zM751 394h4v29h-4zM778 152h4v28h-4zM778 394h4v29h-4zM805 152h4v28h-4zM805 394h4v29h-4zM832 152h4v28h-4zM832 394h4v29h-4zM859 152h4v28h-4zM859 394h4v29h-4zM886 152h4v28h-4zM886 394h4v29h-4zM913 152h4v28h-4zM913 394h4v29h-4zM940 152h4v28h-4zM940 394h4v29h-4zM967 152h4v28h-4zM967 394h4v29h-4z" fill="#940606" shape-rendering="crispEdges"/>
<rect x="536" y="423" width="4" height="53" fill="#ff0808" shape-rendering="crispEdges"/>
<rect x="150" y="178" width="833" height="218" fill="#940606" shape-rendering="crispEdges"/>
<rect x="150" y="180" width="831" height="214" fill="#000" shape-rendering="crispEdges"/>
<rect x="334" y="180" width="2" height="214" fill="#9c0c12" shape-rendering="crispEdges"/>
<rect x="550" y="180" width="2" height="214" fill="#9c0c12" shape-rendering="crispEdges"/>
<rect x="765" y="180" width="2" height="214" fill="#9c0c12" shape-rendering="crispEdges"/>
<g fill="#1b7115">
<circle cx="160.4" cy="192.5" r="8.5"/>
<circle cx="160.4" cy="219.5" r="8.5"/>
<circle cx="160.4" cy="246.5" r="8.5"/>
<circle cx="160.4" cy="273.5" r="8.5"/>
<circle cx="160.4" cy="300.5" r="8.5"/>
<circle cx="160.4" cy="327.5" r="8.5"/>
<circle cx="160.4" cy="354.5" r="8.5"/>
<circle cx="160.4" cy="381.5" r="8.5"/>
<circle cx="187.4" cy="192.5" r="8.5"/>
<circle cx="187.4" cy="219.5" r="8.5"/>
<circle cx="187.4" cy="246.5" r="8.5"/>
<circle cx="187.4" cy="273.5" r="8.5"/>
<circle cx="187.4" cy="300.5" r="8.5"/>
<circle cx="187.4" cy="327.5" r="8.5"/>
<circle cx="187.4" cy="354.5" r="8.5"/>
<circle cx="187.4" cy="381.5" r="8.5"/>
<circle cx="214.4" cy="192.5" r="8.5"/>
<circle cx="214.4" cy="219.5" r="8.5"/>
<circle cx="214.4" cy="246.5" r="8.5"/>
<circle cx="214.4" cy="273.5" r="8.5"/>
<circle cx="214.4" cy="300.5" r="8.5"/>
<circle cx="214.4" cy="327.5" r="8.5"/>
<circle cx="214.4" cy="354.5" r="8.5"/>
<circle cx="214.4" cy="381.5" r="8.5"/>
<circle cx="241.4" cy="192.5" r="8.5"/>
<circle cx="241.4" cy="219.5" r="8.5"/>
<circle cx="241.4" cy="246.5" r="8.5"/>
<circle cx="241.4" cy="273.5" r="8.5"/>
<circle cx="241.4" cy="300.5" r="8.5"/>
<circle cx="241.4" cy="327.5" r="8.5"/>
<circle cx="241.4" cy="354.5" r="8.5"/>
<circle cx="241.4" cy="381.5" r="8.5"/>
<circle cx="268.4" cy="192.5" r="8.5"/>
<circle cx="268.4" cy="219.5" r="8.5"/>
<circle cx="268.4" cy="246.5" r="8.5"/>
<circle cx="268.4" cy="273.5" r="8.5"/>
<circle cx="268.4" cy="300.5" r="8.5"/>
<circle cx="268.4" cy="327.5" r="8.5"/>
<circle cx="268.4" cy="354.5" r="8.5"/>
<circle cx="268.4" cy="381.5" r="8.5"/>
<circle cx="295.4" cy="192.5" r="8.5"/>
<circle cx="295.4" cy="219.5" r="8.5"/>
<circle cx="295.4" cy="246.5" r="8.5"/>
<circle cx="295.4" cy="273.5" r="8.5"/>
<circle cx="295.4" cy="300.5" r="8.5"/>
<circle cx="295.4" cy="327.5" r="8.5"/>
<circle cx="295.4" cy="354.5" r="8.5"/>
<circle cx="295.4" cy="381.5" r="8.5"/>
<circle cx="322.4" cy="192.5" r="8.5"/>
<circle cx="322.4" cy="219.5" r="8.5"/>
<circle cx="322.4" cy="246.5" r="8.5"/>
<circle cx="322.4" cy="273.5" r="8.5"/>
<circle cx="322.4" cy="300.5" r="8.5"/>
<circle cx="322.4" cy="327.5" r="8.5"/>
<circle cx="322.4" cy="354.5" r="8.5"/>
<circle cx="322.4" cy="381.5" r="8.5"/>
<circle cx="349.4" cy="192.5" r="8.5"/>
<circle cx="349.4" cy="219.5" r="8.5"/>
<circle cx="349.4" cy="246.5" r="8.5"/>
<circle cx="349.4" cy="273.5" r="8.5"/>
<circle cx="349.4" cy="300.5" r="8.5"/>
<circle cx="349.4" cy="327.5" r="8.5"/>
<circle cx="349.4" cy="354.5" r="8.5"/>
<circle cx="349.4" cy="381.5" r="8.5"/>
<circle cx="376.4" cy="192.5" r="8.5"/>
<circle cx="376.4" cy="219.5" r="8.5"/>
<circle cx="376.4" cy="246.5" r="8.5"/>
<circle cx="376.4" cy="273.5" r="8.5"/>
<circle cx="376.4" cy="300.5" r="8.5"/>
<circle cx="376.4" cy="327.5" r="8.5"/>
<circle cx="376.4" cy="354.5" r="8.5"/>
<circle cx="376.4" cy="381.5" r="8.5"/>
<circle cx="403.4" cy="192.5" r="8.5"/>
<circle cx="403.4" cy="219.5" r="8.5"/>
<circle cx="403.4" cy="246.5" r="8.5"/>
<circle cx="403.4" cy="273.5" r="8.5"/>
<circle cx="403.4" cy="300.5" r="8.5"/>
<circle cx="403.4" cy="327.5" r="8.5"/>
<circle cx="403.4" cy="354.5" r="8.5"/>
<circle cx="403.4" cy="381.5" r="8.5"/>
<circle cx="430.4" cy="192.5" r="8.5"/>
<circle cx="430.4" cy="219.5" r="8.5"/>
<circle cx="430.4" cy="246.5" r="8.5"/>
<circle cx="430.4" cy="273.5" r="8.5"/>
<circle cx="430.4" cy="300.5" r="8.5"/>
<circle cx="430.4" cy="327.5" r="8.5"/>
<circle cx="430.4" cy="354.5" r="8.5"/>
<circle cx="430.4" cy="381.5" r="8.5"/>
<circle cx="457.4" cy="192.5" r="8.5"/>
<circle cx="457.4" cy="219.5" r="8.5"/>
<circle cx="457.4" cy="246.5" r="8.5"/>
<circle cx="457.4" cy="273.5" r="8.5"/>
<circle cx="457.4" cy="300.5" r="8.5"/>
<circle cx="457.4" cy="327.5" r="8.5"/>
<circle cx="457.4" cy="354.5" r="8.5"/>
<circle cx="457.4" cy="381.5" r="8.5"/>
<circle cx="484.4" cy="192.5" r="8.5"/>
<circle cx="484.4" cy="219.5" r="8.5"/>
<circle cx="484.4" cy="246.5" r="8.5"/>
<circle cx="484.4" cy="273.5" r="8.5"/>
<circle cx="484.4" cy="300.5" r="8.5"/>
<circle cx="484.4" cy="327.5" r="8.5"/>
<circle cx="484.4" cy="354.5" r="8.5"/>
<circle cx="484.4" cy="381.5" r="8.5"/>
<circle cx="511.4" cy="192.5" r="8.5"/>
<circle cx="511.4" cy="219.5" r="8.5"/>
<circle cx="511.4" cy="246.5" r="8.5"/>
<circle cx="511.4" cy="273.5" r="8.5"/>
<circle cx="511.4" cy="300.5" r="8.5"/>
<circle cx="511.4" cy="327.5" r="8.5"/>
<circle cx="511.4" cy="354.5" r="8.5"/>
<circle cx="511.4" cy="381.5" r="8.5"/>
<circle cx="538.4" cy="192.5" r="8.5"/>
<circle cx="538.4" cy="219.5" r="8.5"/>
<circle cx="538.4" cy="246.5" r="8.5"/>
<circle cx="538.4" cy="273.5" r="8.5"/>
<circle cx="538.4" cy="300.5" r="8.5"/>
<circle cx="538.4" cy="327.5" r="8.5"/>
<circle cx="538.4" cy="354.5" r="8.5"/>
<circle cx="538.4" cy="381.5" r="8.5"/>
<circle cx="565.4" cy="192.5" r="8.5"/>
<circle cx="565.4" cy="219.5" r="8.5"/>
<circle cx="565.4" cy="246.5" r="8.5"/>
<circle cx="565.4" cy="273.5" r="8.5"/>
<circle cx="565.4" cy="300.5" r="8.5"/>
<circle cx="565.4" cy="327.5" r="8.5"/>
<circle cx="565.4" cy="354.5" r="8.5"/>
<circle cx="565.4" cy="381.5" r="8.5"/>
<circle cx="592.4" cy="192.5" r="8.5"/>
<circle cx="592.4" cy="219.5" r="8.5"/>
<circle cx="592.4" cy="246.5" r="8.5"/>
<circle cx="592.4" cy="273.5" r="8.5"/>
<circle cx="592.4" cy="300.5" r="8.5"/>
<circle cx="592.4" cy="327.5" r="8.5"/>
<circle cx="592.4" cy="354.5" r="8.5"/>
<circle cx="592.4" cy="381.5" r="8.5"/>
<circle cx="619.4" cy="192.5" r="8.5"/>
<circle cx="619.4" cy="219.5" r="8.5"/>
<circle cx="619.4" cy="246.5" r="8.5"/>
<circle cx="619.4" cy="273.5" r="8.5"/>
<circle cx="619.4" cy="300.5" r="8.5"/>
<circle cx="619.4" cy="327.5" r="8.5"/>
<circle cx="619.4" cy="354.5" r="8.5"/>
<circle cx="619.4" cy="381.5" r="8.5"/>
<circle cx="645.4" cy="192.5" r="8.5"/>
<circle cx="645.4" cy="219.5" r="8.5"/>
<circle cx="645.4" cy="246.5" r="8.5"/>
<circle cx="645.4" cy="273.5" r="8.5"/>
<circle cx="645.4" cy="300.5" r="8.5"/>
<circle cx="645.4" cy="327.5" r="8.5"/>
<circle cx="645.4" cy="354.5" r="8.5"/>
<circle cx="645.4" cy="381.5" r="8.5"/>
<circle cx="672.4" cy="192.5" r="8.5"/>
<circle cx="672.4" cy="219.5" r="8.5"/>
<circle cx="672.4" cy="246.5" r="8.5"/>
<circle cx="672.4" cy="273.5" r="8.5"/>
<circle cx="672.4" cy="300.5" r="8.5"/>
<circle cx="672.4" cy="327.5" r="8.5"/>
<circle cx="672.4" cy="354.5" r="8.5"/>
<circle cx="672.4" cy="381.5" r="8.5"/>
<circle cx="699.4" cy="192.5" r="8.5"/>
<circle cx="699.4" cy="219.5" r="8.5"/>
<circle cx="699.4" cy="246.5" r="8.5"/>
<circle cx="699.4" cy="273.5" r="8.5"/>
<circle cx="699.4" cy="300.5" r="8.5"/>
<circle cx="699.4" cy="327.5" r="8.5"/>
<circle cx="699.4" cy="354.5" r="8.5"/>
<circle cx="699.4" cy="381.5" r="8.5"/>
<circle cx="726.4" cy="192.5" r="8.5"/>
<circle cx="726.4" cy="219.5" r="8.5"/>
<circle cx="726.4" cy="246.5" r="8.5"/>
<circle cx="726.4" cy="273.5" r="8.5"/>
<circle cx="726.4" cy="300.5" r="8.5"/>
<circle cx="726.4" cy="327.5" r="8.5"/>
<circle cx="726.4" cy="354.5" r="8.5"/>
<circle cx="726.4" cy="381.5" r="8.5"/>
<circle cx="753.4" cy="192.5" r="8.5"/>
<circle cx="753.4" cy="219.5" r="8.5"/>
<circle cx="753.4" cy="246.5" r="8.5"/>
<circle cx="753.4" cy="273.5" r="8.5"/>
<circle cx="753.4" cy="300.5" r="8.5"/>
<circle cx="753.4" cy="327.5" r="8.5"/>
<circle cx="753.4" cy="354.5" r="8.5"/>
<circle cx="753.4" cy="381.5" r="8.5"/>
<circle cx="780.4" cy="192.5" r="8.5"/>
<circle cx="780.4" cy="219.5" r="8.5"/>
<circle cx="780.4" cy="246.5" r="8.5"/>
<circle cx="780.4" cy="273.5" r="8.5"/>
<circle cx="780.4" cy="300.5" r="8.5"/>
<circle cx="780.4" cy="327.5" r="8.5"/>
<circle cx="780.4" cy="354.5" r="8.5"/>
<circle cx="780.4" cy="381.5" r="8.5"/>
<circle cx="807.4" cy="192.5" r="8.5"/>
<circle cx="807.4" cy="219.5" r="8.5"/>
<circle cx="807.4" cy="246.5" r="8.5"/>
<circle cx="807.4" cy="273.5" r="8.5"/>
<circle cx="807.4" cy="300.5" r="8.5"/>
<circle cx="807.4" cy="327.5" r="8.5"/>
<circle cx="807.4" cy="354.5" r="8.5"/>
<circle cx="807.4" cy="381.5" r="8.5"/>
<circle cx="834.4" cy="192.5" r="8.5"/>
<circle cx="834.4" cy="219.5" r="8.5"/>
<circle cx="834.4" cy="246.5" r="8.5"/>
<circle cx="834.4" cy="273.5" r="8.5"/>
<circle cx="834.4" cy="300.5" r="8.5"/>
<circle cx="834.4" cy="327.5" r="8.5"/>
<circle cx="834.4" cy="354.5" r="8.5"/>
<circle cx="834.4" cy="381.5" r="8.5"/>
<circle cx="861.4" cy="192.5" r="8.5"/>
<circle cx="861.4" cy="219.5" r="8.5"/>
<circle cx="861.4" cy="246.5" r="8.5"/>
<circle cx="861.4" cy="273.5" r="8.5"/>
<circle cx="861.4" cy="300.5" r="8.5"/>
<circle cx="861.4" cy="327.5" r="8.5"/>
<circle cx="861.4" cy="354.5" r="8.5"/>
<circle cx="861.4" cy="381.5" r="8.5"/>
<circle cx="888.4" cy="192.5" r="8.5"/>
<circle cx="888.4" cy="219.5" r="8.5"/>
<circle cx="888.4" cy="246.5" r="8.5"/>
<circle cx="888.4" cy="273.5" r="8.5"/>
<circle cx="888.4" cy="300.5" r="8.5"/>
<circle cx="888.4" cy="327.5" r="8.5"/>
<circle cx="888.4" cy="354.5" r="8.5"/>
<circle cx="888.4" cy="381.5" r="8.5"/>
<circle cx="915.4" cy="192.5" r="8.5"/>
<circle cx="915.4" cy="219.5" r="8.5"/>
<circle cx="915.4" cy="246.5" r="8.5"/>
<circle cx="915.4" cy="273.5" r="8.5"/>
<circle cx="915.4" cy="300.5" r="8.5"/>
<circle cx="915.4" cy="327.5" r="8.5"/>
<circle cx="915.4" cy="354.5" r="8.5"/>
<circle cx="915.4" cy="381.5" r="8.5"/>
<circle cx="942.4" cy="192.5" r="8.5"/>
<circle cx="942.4" cy="219.5" r="8.5"/>
<circle cx="942.4" cy="246.5" r="8.5"/>
<circle cx="942.4" cy="273.5" r="8.5"/>
<circle cx="942.4" cy="300.5" r="8.5"/>
<circle cx="942.4" cy="327.5" r="8.5"/>
<circle cx="942.4" cy="354.5" r="8.5"/>
<circle cx="942.4" cy="381.5" r="8.5"/>
<circle cx="969.4" cy="192.5" r="8.5"/>
<circle cx="969.4" cy="219.5" r="8.5"/>
<circle cx="969.4" cy="246.5" r="8.5"/>
<circle cx="969.4" cy="273.5" r="8.5"/>
<circle cx="969.4" cy="300.5" r="8.5"/>
<circle cx="969.4" cy="327.5" r="8.5"/>
<circle cx="969.4" cy="354.5" r="8.5"/>
<circle cx="969.4" cy="381.5" r="8.5"/>
</g>
<g stroke="#0a480a" stroke-width="4.2" fill="none" stroke-linejoin="round">
<polygon points="169.83,523.37 164.37,528.83 156.63,528.83 151.17,523.37 151.17,515.63 156.63,510.17 164.37,510.17 169.83,515.63"/>
<polygon points="196.83,523.37 191.37,528.83 183.63,528.83 178.17,523.37 178.17,515.63 183.63,510.17 191.37,510.17 196.83,515.63"/>
<polygon points="223.83,523.37 218.37,528.83 210.63,528.83 205.17,523.37 205.17,515.63 210.63,510.17 218.37,510.17 223.83,515.63"/>
<polygon points="250.83,523.37 245.37,528.83 237.63,528.83 232.17,523.37 232.17,515.63 237.63,510.17 245.37,510.17 250.83,515.63"/>
<polygon points="277.83,523.37 272.37,528.83 264.63,528.83 259.17,523.37 259.17,515.63 264.63,510.17 272.37,510.17 277.83,515.63"/>
<polygon points="304.83,523.37 299.37,528.83 291.63,528.83 286.17,523.37 286.17,515.63 291.63,510.17 299.37,510.17 304.83,515.63"/>
<polygon points="331.83,523.37 326.37,528.83 318.63,528.83 313.17,523.37 313.17,515.63 318.63,510.17 326.37,510.17 331.83,515.63"/>
<polygon points="358.83,523.37 353.37,528.83 345.63,528.83 340.17,523.37 340.17,515.63 345.63,510.17 353.37,510.17 358.83,515.63"/>
<polygon points="385.83,523.37 380.37,528.83 372.63,528.83 367.17,523.37 367.17,515.63 372.63,510.17 380.37,510.17 385.83,515.63"/>
<polygon points="412.83,523.37 407.37,528.83 399.63,528.83 394.17,523.37 394.17,515.63 399.63,510.17 407.37,510.17 412.83,515.63"/>
<polygon points="439.83,523.37 434.37,528.83 426.63,528.83 421.17,523.37 421.17,515.63 426.63,510.17 434.37,510.17 439.83,515.63"/>
<polygon points="466.83,523.37 461.37,528.83 453.63,528.83 448.17,523.37 448.17,515.63 453.63,510.17 461.37,510.17 466.83,515.63"/>
<polygon points="493.83,523.37 488.37,528.83 480.63,528.83 475.17,523.37 475.17,515.63 480.63,510.17 488.37,510.17 493.83,515.63"/>
<polygon points="520.83,523.37 515.37,528.83 507.63,528.83 502.17,523.37 502.17,515.63 507.63,510.17 515.37,510.17 520.83,515.63"/>
<polygon points="547.83,523.37 542.37,528.83 534.63,528.83 529.17,523.37 529.17,515.63 534.63,510.17 542.37,510.17 547.83,515.63"/>
<polygon points="574.83,523.37 569.37,528.83 561.63,528.83 556.17,523.37 556.17,515.63 561.63,510.17 569.37,510.17 574.83,515.63"/>
<polygon points="601.83,523.37 596.37,528.83 588.63,528.83 583.17,523.37 583.17,515.63 588.63,510.17 596.37,510.17 601.83,515.63"/>
<polygon points="628.83,523.37 623.37,528.83 615.63,528.83 610.17,523.37 610.17,515.63 615.63,510.17 623.37,510.17 628.83,515.63"/>
<polygon points="654.83,523.37 649.37,528.83 641.63,528.83 636.17,523.37 636.17,515.63 641.63,510.17 649.37,510.17 654.83,515.63"/>
<polygon points="681.83,523.37 676.37,528.83 668.63,528.83 663.17,523.37 663.17,515.63 668.63,510.17 676.37,510.17 681.83,515.63"/>
<polygon points="708.83,523.37 703.37,528.83 695.63,528.83 690.17,523.37 690.17,515.63 695.63,510.17 703.37,510.17 708.83,515.63"/>
<polygon points="735.83,523.37 730.37,528.83 722.63,528.83 717.17,523.37 717.17,515.63 722.63,510.17 730.37,510.17 735.83,515.63"/>
<polygon points="762.83,523.37 757.37,528.83 749.63,528.83 744.17,523.37 744.17,515.63 749.63,510.17 757.37,510.17 762.83,515.63"/>
<polygon points="789.83,523.37 784.37,528.83 776.63,528.83 771.17,523.37 771.17,515.63 776.63,510.17 784.37,510.17 789.83,515.63"/>
<polygon points="816.83,523.37 811.37,528.83 803.63,528.83 798.17,523.37 798.17,515.63 803.63,510.17 811.37,510.17 816.83,515.63"/>
<polygon points="843.83,523.37 838.37,528.83 830.63,528.83 825.17,523.37 825.17,515.63 830.63,510.17 838.37,510.17 843.83,515.63"/>
<polygon points="870.83,523.37 865.37,528.83 857.63,528.83 852.17,523.37 852.17,515.63 857.63,510.17 865.37,510.17 870.83,515.63"/>
<polygon points="897.83,523.37 892.37,528.83 884.63,528.83 879.17,523.37 879.17,515.63 884.63,510.17 892.37,510.17 897.83,515.63"/>
<polygon points="924.83,523.37 919.37,528.83 911.63,528.83 906.17,523.37 906.17,515.63 911.63,510.17 919.37,510.17 924.83,515.63"/>
<polygon points="951.83,523.37 946.37,528.83 938.63,528.83 933.17,523.37 933.17,515.63 938.63,510.17 946.37,510.17 951.83,515.63"/>
<polygon points="978.83,523.37 973.37,528.83 965.63,528.83 960.17,523.37 960.17,515.63 965.63,510.17 973.37,510.17 978.83,515.63"/>
</g>
<g font-family="Liberation Sans, sans-serif" font-size="21.5" fill="#0c0c0c" stroke="#0c0c0c" stroke-width="0.55" text-anchor="end">
<text x="167.60" y="543.5" transform="rotate(-90 167.60 543.5)">31</text>
<text x="194.60" y="543.5" transform="rotate(-90 194.60 543.5)">30</text>
<text x="221.60" y="543.5" transform="rotate(-90 221.60 543.5)">29</text>
<text x="248.60" y="543.5" transform="rotate(-90 248.60 543.5)">28</text>
<text x="275.60" y="543.5" transform="rotate(-90 275.60 543.5)">27</text>
<text x="302.60" y="543.5" transform="rotate(-90 302.60 543.5)">26</text>
<text x="329.60" y="543.5" transform="rotate(-90 329.60 543.5)">25</text>
<text x="356.60" y="543.5" transform="rotate(-90 356.60 543.5)">24</text>
<text x="383.60" y="543.5" transform="rotate(-90 383.60 543.5)">23</text>
<text x="410.60" y="543.5" transform="rotate(-90 410.60 543.5)">22</text>
<text x="437.60" y="543.5" transform="rotate(-90 437.60 543.5)">21</text>
<text x="464.60" y="543.5" transform="rotate(-90 464.60 543.5)">20</text>
<text x="491.60" y="543.5" transform="rotate(-90 491.60 543.5)">19</text>
<text x="518.60" y="543.5" transform="rotate(-90 518.60 543.5)">18</text>
<text x="545.60" y="543.5" transform="rotate(-90 545.60 543.5)">17</text>
<text x="572.60" y="543.5" transform="rotate(-90 572.60 543.5)">16</text>
<text x="599.60" y="543.5" transform="rotate(-90 599.60 543.5)">15</text>
<text x="626.60" y="543.5" transform="rotate(-90 626.60 543.5)">14</text>
<text x="652.60" y="543.5" transform="rotate(-90 652.60 543.5)">13</text>
<text x="679.60" y="543.5" transform="rotate(-90 679.60 543.5)">12</text>
<text x="706.60" y="543.5" transform="rotate(-90 706.60 543.5)">11</text>
<text x="733.60" y="543.5" transform="rotate(-90 733.60 543.5)">10</text>
<text x="760.60" y="543.5" transform="rotate(-90 760.60 543.5)">9</text>
<text x="787.60" y="543.5" transform="rotate(-90 787.60 543.5)">8.</text>
<text x="814.60" y="543.5" transform="rotate(-90 814.60 543.5)">7.</text>
<text x="841.60" y="543.5" transform="rotate(-90 841.60 543.5)">6.</text>
<text x="868.60" y="543.5" transform="rotate(-90 868.60 543.5)">5.</text>
<text x="895.60" y="543.5" transform="rotate(-90 895.60 543.5)">4.</text>
<text x="922.60" y="543.5" transform="rotate(-90 922.60 543.5)">3.</text>
<text x="949.60" y="543.5" transform="rotate(-90 949.60 543.5)">2.</text>
<text x="976.60" y="543.5" transform="rotate(-90 976.60 543.5)">1.</text>
</g>
<rect x="758.5" y="143.5" width="232" height="288" fill="none" stroke="#c82020" stroke-width="1" stroke-dasharray="3 3" shape-rendering="crispEdges"/>
<path d="M758.5 180V394" stroke="#000" stroke-width="1" shape-rendering="crispEdges"/>
<path d="M758.5 180V394" stroke="#58d8e0" stroke-width="1" stroke-dasharray="3 3" shape-rendering="crispEdges"/>
<path d="M779 143.5h3M779 431.5h3M806 143.5h3M806 431.5h3M833 143.5h3M833 431.5h3M860 143.5h3M860 431.5h3M887 143.5h3M887 431.5h3M914 143.5h3M914 431.5h3M941 143.5h3M941 431.5h3M968 143.5h3M968 431.5h3" stroke="#8fd8d0" stroke-width="1" shape-rendering="crispEdges"/>
<path d="M160 476.5h1M187 476.5h1M214 476.5h1M241 476.5h1M268 476.5h1M295 476.5h1M322 476.5h1M349 476.5h1M376 476.5h1M403 476.5h1M430 476.5h1M457 476.5h1M484 476.5h1M511 476.5h1M538 476.5h1M565 476.5h1M592 476.5h1M619 476.5h1M645 476.5h1M672 476.5h1M699 476.5h1M726 476.5h1M753 476.5h1M780 476.5h1M807 476.5h1M834 476.5h1M861 476.5h1M888 476.5h1M915 476.5h1M942 476.5h1M969 476.5h1" stroke="#a8c4a8" stroke-width="1" shape-rendering="crispEdges"/>
<g stroke="#2424a8" stroke-width="1.2" fill="none"><circle cx="672.5" cy="611.5" r="9"/><path d="M658 611.5H687M672.5 597V626"/></g>
</svg>
<svg style="left:10px;top:654px" width="135" height="24" viewBox="10 654 135 24">
<g fill="none" stroke="#2c428e" stroke-width="2.800"><path d="M26.500 661.500A5.600 5.600 0 1 0 27.600 667"/><path d="M39 661.500A5.600 5.600 0 1 1 37.900 667"/></g>
<path d="M23.500 658.500h6v6.500z" fill="#2c428e"/><path d="M42 658.500h-6v6.500z" fill="#2c428e"/>
<path d="M92 665.500l5.500-5v3.200h3v3.600h-3v3.200z" fill="#7a90d0"/><path d="M108.500 665.500l-5.500-5v3.200h-3v3.600h3v3.200z" fill="#2c428e"/>
<path d="M120.500 657.500l5 5.500h-3.200v3h-3.600v-3h-3.200z" fill="#2c428e"/><path d="M120.500 674l5-5.500h-3.200v-3h-3.600v3h-3.200z" fill="#7a90d0"/>
</svg>
<div class="a" style="left:5px;top:654px;width:3px;height:23px;border-left:1px solid #fff;border-right:1px solid #b4b1a2;border-bottom:1px solid #b4b1a2;box-sizing:border-box;"></div>
<div class="a" style="left:56px;top:657px;width:27px;height:17px;background:#fff;border:1px solid;border-color:#404040 #e8e6da #e8e6da #404040;box-sizing:border-box;"></div>
<div class="a" style="left:86px;top:656px;width:1px;height:18px;background:#c5c2b2;border-right:1px solid #fff;"></div>
<div class="a" style="left:137px;top:652px;width:1px;height:26px;background:#c5c2b2;border-right:1px solid #fff;"></div>
<div class="a" style="left:141px;top:654px;width:2px;height:22px;border-left:1px solid #fff;border-right:1px solid #aca899;box-sizing:border-box;"></div>
<div class="a" style="left:149px;top:656px;width:157px;height:19px;background:#000;"></div>
<div class="a" style="left:150px;top:657px;width:38px;height:17px;background:#ece9d8;box-sizing:border-box;border:1px solid;border-color:#fff #8a887a #8a887a #fff;"></div>
<div class="a" style="left:189px;top:657px;width:38px;height:17px;background:#ece9d8;box-sizing:border-box;border:1px solid;border-color:#fff #8a887a #8a887a #fff;"></div>
<div class="a" style="left:228px;top:657px;width:38px;height:17px;background:#ece9d8;box-sizing:border-box;border:1px solid;border-color:#fff #8a887a #8a887a #fff;"></div>
<div class="a" style="left:267px;top:657px;width:38px;height:17px;background:#ece9d8;box-sizing:border-box;border:1px solid;border-color:#fff #8a887a #8a887a #fff;"></div>
<svg style="left:149px;top:656px" width="157" height="19" viewBox="149 656 157 19"><g fill="#000"><path d="M166 660v11l7.500-5.500z"/><path d="M203 660h2.200v11h-2.200zM206.500 660v11l7.500-5.500z"/><path d="M243 660h2.600v11h-2.600zM248 660h2.600v11h-2.600z"/><rect x="281" y="660.500" width="10" height="10"/></g></svg>
<div class="a sunk" style="left:311px;top:656px;width:98px;height:20px;"></div>
<svg style="left:314px;top:658px" width="15" height="15" viewBox="0 0 15 15"><circle cx="7.500" cy="7.500" r="6.500" fill="#6a6a6a"/><circle cx="7.500" cy="7.500" r="6.500" fill="none" stroke="#999" stroke-width="1"/><text x="7.500" y="12" font-size="12" font-weight="bold" font-family="Liberation Serif, serif" fill="#fff" text-anchor="middle">i</text></svg>
<div class="a" style="left:413px;top:652px;width:1px;height:26px;background:#c5c2b2;border-right:1px solid #fff;"></div>
<div class="a" style="left:417px;top:654px;width:2px;height:22px;border-left:1px solid #fff;border-right:1px solid #aca899;box-sizing:border-box;"></div>
<div class="a sunk" style="left:425px;top:659px;width:434px;height:16px;overflow:hidden;"></div>
<div class="a" style="left:863px;top:652px;width:1px;height:26px;background:#c5c2b2;border-right:1px solid #fff;"></div>
<div class="a" style="left:867px;top:654px;width:2px;height:22px;border-left:1px solid #fff;border-right:1px solid #aca899;box-sizing:border-box;"></div>
<div class="a sunk" style="left:874px;top:659px;width:125px;height:16px;"></div>
<div class="a" id="taskbar" style="left:0;top:707px;width:1024px;height:61px;background:linear-gradient(to bottom,#35669c 0px,#35669c 1px,#4088f4 1px,#3a80f0 3px,#2866e4 5px,#2663e0 9px,#2663e0 30px,#2560dc 52px,#2054cc 58px,#1c48b4 61px);"></div>
<div class="a" style="left:0;top:708px;width:96px;height:30px;border-radius:0 10px 12px 0/0 14px 16px 0;background:linear-gradient(to bottom,#4c9c4c 0,#5cb45c 10%,#42a442 25%,#3a9c3a 55%,#348f36 80%,#2c7a30 100%);box-shadow:1px 0 1px #1a3a8a;"></div>
<svg style="left:10px;top:714px" width="20" height="18" viewBox="0 0 20 18"><g transform="skewX(-8)"><rect x="4" y="1" width="7" height="7" rx="1.5" fill="#e8542c"/><rect x="12" y="2" width="7" height="7" rx="1.5" fill="#7cc040"/><rect x="3" y="9.500" width="7" height="7" rx="1.5" fill="#4a8ae8"/><rect x="11" y="10.500" width="7" height="7" rx="1.5" fill="#f4c834"/></g></svg>
<svg style="left:109px;top:715px" width="16" height="16" viewBox="0 0 16 16"><rect x="1" y="3" width="14" height="12" rx="1" fill="#f4f4f4" stroke="#5a6a9a" stroke-width="1"/><rect x="1" y="3" width="14" height="3.500" fill="#3a4a8a"/><path d="M2 1.500l2 2M6 1l1 2.500M10 1l0 2.500M14 1.500l-1 2" stroke="#e8c020" stroke-width="1.200"/><text x="8" y="13.500" font-size="7.500" font-weight="bold" text-anchor="middle" fill="#2a3a8a" font-family="Liberation Sans, sans-serif">321</text></svg>
<svg style="left:132px;top:715px" width="16" height="16" viewBox="0 0 16 16"><circle cx="8" cy="8" r="7.300" fill="#e0641a"/><circle cx="9.500" cy="6.500" r="4.500" fill="#3a62c8"/><circle cx="10.500" cy="5" r="1.800" fill="#6aa0e8"/><path d="M2 6C4 3 7 2 9 3C6 4 6 7 8 8C10 9 12 8 12 6C14 9 12 14 8 14.500C4 14.500 1 11 2 6z" fill="#f09a28"/><path d="M3 5C2 9 4 13 8 13.500" stroke="#c8501c" stroke-width="1" fill="none"/></svg>
<svg style="left:155px;top:715px" width="16" height="16" viewBox="0 0 16 16"><circle cx="8" cy="8" r="7" fill="#f8d030" stroke="#c88a18" stroke-width="1"/><circle cx="5.500" cy="6" r="1" fill="#3a2a10"/><circle cx="10.500" cy="6" r="1" fill="#3a2a10"/><path d="M3.500 9h9c0 3-2 4.500-4.500 4.500S3.500 12 3.500 9z" fill="#c82a1c"/><path d="M4.500 9.300h7" stroke="#fff" stroke-width="1.400"/></svg>
<svg style="left:108px;top:744px" width="16" height="16" viewBox="0 0 16 16"><path d="M3 3h9l2 2v8l-2 2H3z" fill="#e8f0ff" stroke="#4a8ad8" stroke-width="1.200"/><path d="M5 10l5-5l2 2l-5 5H5z" fill="#3a78d0"/><path d="M12 2l3 2" stroke="#4a8ad8" stroke-width="1.500"/></svg>
<svg style="left:132px;top:744px" width="16" height="16" viewBox="0 0 16 16"><rect x="1" y="2" width="6" height="6" rx="1" fill="#fbf6f4" stroke="#e0b0a8" stroke-width="0.800"/><rect x="9" y="2" width="6" height="6" rx="1" fill="#fbf6f4" stroke="#e0b0a8" stroke-width="0.800"/><rect x="5" y="9" width="6" height="6" rx="1" fill="#fbf6f4" stroke="#e0b0a8" stroke-width="0.800"/><text x="4" y="7.500" font-size="5.500" font-weight="bold" text-anchor="middle" fill="#c02020" font-family="Liberation Sans, sans-serif">u</text><text x="12" y="7.500" font-size="5.500" font-weight="bold" text-anchor="middle" fill="#c02020" font-family="Liberation Sans, sans-serif">i</text><text x="8" y="14.500" font-size="5.500" font-weight="bold" text-anchor="middle" fill="#c02020" font-family="Liberation Sans, sans-serif">n</text></svg>
<svg style="left:154px;top:744px" width="16" height="16" viewBox="0 0 16 16"><circle cx="8" cy="8" r="7" fill="#f4f4f4" stroke="#6a6a6a" stroke-width="1"/><path d="M8 1A7 7 0 0 1 15 8H8z" fill="#e84a2c"/><path d="M15 8A7 7 0 0 1 8 15V8z" fill="#f0c028"/><path d="M8 15A7 7 0 0 1 1 8H8z" fill="#4aa040"/><path d="M1 8A7 7 0 0 1 8 1V8z" fill="#3a78d8"/><circle cx="8" cy="8" r="4" fill="#f8f8f8"/><path d="M6.500 5.500v5l4-2.500z" fill="#222"/></svg>
<div class="a" style="left:182px;top:712px;width:158px;height:23px;border-radius:3px;background:linear-gradient(to bottom,#5a9af8 0,#3c82f2 12%,#3a80f0 80%,#3272e4 100%);box-shadow:inset -1px -1px 1px #2a62d0;"></div>
<svg style="left:192px;top:715px" width="16" height="16" viewBox="0 0 16 16"><path d="M1 4h5l1.500 1.500H15V14H1z" fill="#e8c858" stroke="#a8883a" stroke-width="1"/><path d="M3 7h12l-1.500 7H1z" fill="#f8e088" stroke="#a8883a" stroke-width="0.800"/><rect x="7" y="6" width="5" height="5" fill="#d8e8f8" stroke="#6a8ab8" stroke-width="0.800"/></svg>
<div class="a" style="left:342px;top:712px;width:158px;height:23px;border-radius:3px;background:linear-gradient(to bottom,#5a9af8 0,#3c82f2 12%,#3a80f0 80%,#3272e4 100%);box-shadow:inset -1px -1px 1px #2a62d0;"></div>
<svg style="left:350px;top:715px" width="16" height="16" viewBox="0 0 16 16"><circle cx="8" cy="8" r="7.300" fill="#e0641a"/><circle cx="9.500" cy="6.500" r="4.500" fill="#3a62c8"/><circle cx="10.500" cy="5" r="1.800" fill="#6aa0e8"/><path d="M2 6C4 3 7 2 9 3C6 4 6 7 8 8C10 9 12 8 12 6C14 9 12 14 8 14.500C4 14.500 1 11 2 6z" fill="#f09a28"/><path d="M3 5C2 9 4 13 8 13.500" stroke="#c8501c" stroke-width="1" fill="none"/></svg>
<div class="a" style="left:502px;top:712px;width:158px;height:23px;border-radius:3px;background:linear-gradient(to bottom,#5a9af8 0,#3c82f2 12%,#3a80f0 80%,#3272e4 100%);box-shadow:inset -1px -1px 1px #2a62d0;"></div>
<svg style="left:510px;top:715px" width="16" height="16" viewBox="0 0 16 16"><circle cx="8" cy="8" r="7.300" fill="#e0641a"/><circle cx="9.500" cy="6.500" r="4.500" fill="#3a62c8"/><circle cx="10.500" cy="5" r="1.800" fill="#6aa0e8"/><path d="M2 6C4 3 7 2 9 3C6 4 6 7 8 8C10 9 12 8 12 6C14 9 12 14 8 14.500C4 14.500 1 11 2 6z" fill="#f09a28"/><path d="M3 5C2 9 4 13 8 13.500" stroke="#c8501c" stroke-width="1" fill="none"/></svg>
<div class="a" style="left:662px;top:712px;width:158px;height:23px;border-radius:3px;background:linear-gradient(to bottom,#1a4aae 0,#1e52bc 20%,#2058c4 100%);box-shadow:inset 1px 1px 1px #143c92;"></div>
<svg style="left:672px;top:715px" width="16" height="16" viewBox="0 0 16 16"><rect x="0" y="2" width="16" height="12" fill="#0a14c8"/><text x="1.500" y="11.500" font-size="9" font-family="Liberation Sans, sans-serif" fill="#fff" textLength="13" lengthAdjust="spacingAndGlyphs">ISIS</text></svg>
<div class="a" style="left:921px;top:707px;width:103px;height:61px;background:linear-gradient(to bottom,#2aa0f4 0,#1a96f0 3px,#1290e8 8px,#118ce6 50px,#0f80d8 61px);border-left:1px solid #0c5cb8;box-shadow:inset 1px 0 0 #3ab0f8;"></div>
<svg style="left:910px;top:728px" width="20" height="20" viewBox="0 0 20 20"><circle cx="10" cy="10" r="9" fill="#2a7ae8" stroke="#7ab8f8" stroke-width="1"/><circle cx="10" cy="10" r="7" fill="#3a8af0"/><path d="M11.500 6.500L8 10l3.500 3.500" fill="none" stroke="#fff" stroke-width="2"/></svg>
<svg style="left:930px;top:712px" width="16" height="16" viewBox="0 0 16 16"><rect x="6" y="1" width="8" height="6" fill="#b8d0f0" stroke="#e8f0ff" stroke-width="1"/><rect x="1" y="6" width="8" height="6" fill="#8ab0e8" stroke="#e8f0ff" stroke-width="1"/><rect x="3" y="13" width="5" height="1.500" fill="#d8d8d8"/><rect x="9" y="8" width="4" height="1.500" fill="#d8d8d8"/></svg>
<svg id="texts" style="left:0;top:0;pointer-events:none;will-change:transform;opacity:0.999" width="1024" height="768">
<text x="27" y="16.7" font-size="13.8" fill="#0a2a80" textLength="165" lengthAdjust="spacingAndGlyphs" font-weight="bold" font-family="Liberation Sans, sans-serif">3 matrix - ISIS Professional</text>
<text x="26" y="15.7" font-size="13.8" fill="#fff" textLength="165" lengthAdjust="spacingAndGlyphs" font-weight="bold" font-family="Liberation Sans, sans-serif">3 matrix - ISIS Professional</text>
<text x="8.5" y="37" font-size="11" fill="#000" textLength="15.8" lengthAdjust="spacingAndGlyphs" font-family="DejaVu Sans Condensed, DejaVu Sans, Liberation Sans, sans-serif">File</text>
<text x="37" y="37" font-size="11" fill="#000" textLength="21.3" lengthAdjust="spacingAndGlyphs" font-family="DejaVu Sans Condensed, DejaVu Sans, Liberation Sans, sans-serif">View</text>
<text x="70.5" y="37" font-size="11" fill="#000" textLength="17.5" lengthAdjust="spacingAndGlyphs" font-family="DejaVu Sans Condensed, DejaVu Sans, Liberation Sans, sans-serif">Edit</text>
<text x="100.8" y="37" font-size="11" fill="#000" textLength="24.2" lengthAdjust="spacingAndGlyphs" font-family="DejaVu Sans Condensed, DejaVu Sans, Liberation Sans, sans-serif">Tools</text>
<text x="137.5" y="37" font-size="11" fill="#000" textLength="31.5" lengthAdjust="spacingAndGlyphs" font-family="DejaVu Sans Condensed, DejaVu Sans, Liberation Sans, sans-serif">Design</text>
<text x="181.8" y="37" font-size="11" fill="#000" textLength="28.2" lengthAdjust="spacingAndGlyphs" font-family="DejaVu Sans Condensed, DejaVu Sans, Liberation Sans, sans-serif">Graph</text>
<text x="222.5" y="37" font-size="11" fill="#000" textLength="32.5" lengthAdjust="spacingAndGlyphs" font-family="DejaVu Sans Condensed, DejaVu Sans, Liberation Sans, sans-serif">Source</text>
<text x="267.8" y="37" font-size="11" fill="#000" textLength="30.2" lengthAdjust="spacingAndGlyphs" font-family="DejaVu Sans Condensed, DejaVu Sans, Liberation Sans, sans-serif">Debug</text>
<text x="310.5" y="37" font-size="11" fill="#000" textLength="32.3" lengthAdjust="spacingAndGlyphs" font-family="DejaVu Sans Condensed, DejaVu Sans, Liberation Sans, sans-serif">Library</text>
<text x="356" y="37" font-size="11" fill="#000" textLength="43" lengthAdjust="spacingAndGlyphs" font-family="DejaVu Sans Condensed, DejaVu Sans, Liberation Sans, sans-serif">Template</text>
<text x="411.5" y="37" font-size="11" fill="#000" textLength="34.5" lengthAdjust="spacingAndGlyphs" font-family="DejaVu Sans Condensed, DejaVu Sans, Liberation Sans, sans-serif">System</text>
<text x="458.5" y="37" font-size="11" fill="#000" textLength="20.5" lengthAdjust="spacingAndGlyphs" font-family="DejaVu Sans Condensed, DejaVu Sans, Liberation Sans, sans-serif">Help</text>
<text x="38.2" y="194" font-size="12" fill="#000" textLength="7.5" lengthAdjust="spacingAndGlyphs" font-family="Liberation Sans, sans-serif">P</text>
<text x="56.3" y="194" font-size="12" fill="#000" textLength="6.2" lengthAdjust="spacingAndGlyphs" font-family="Liberation Sans, sans-serif">L</text>
<text x="87.4" y="194" font-size="12" fill="#ccd8f6" textLength="44.9" lengthAdjust="spacingAndGlyphs" font-family="Liberation Sans, sans-serif">DEVICES</text>
<text x="36.6" y="210.0" font-size="11.5" fill="#fff" textLength="42.8" lengthAdjust="spacingAndGlyphs" font-family="Liberation Sans, sans-serif">74LS595</text>
<text x="36.6" y="222.8" font-size="11.5" fill="#000" textLength="44.5" lengthAdjust="spacingAndGlyphs" font-family="Liberation Sans, sans-serif">AT89C52</text>
<text x="36.6" y="235.6" font-size="11.5" fill="#000" textLength="55.2" lengthAdjust="spacingAndGlyphs" font-family="Liberation Sans, sans-serif">AT89C2051</text>
<text x="36.9" y="248.4" font-size="11.5" fill="#000" textLength="102.7" lengthAdjust="spacingAndGlyphs" font-family="Liberation Sans, sans-serif">MATRIX-8X8-GREEN</text>
<text x="36.9" y="261.2" font-size="11.5" fill="#000" textLength="110.2" lengthAdjust="spacingAndGlyphs" font-family="Liberation Sans, sans-serif">MATRIX-8X8-ORANGE</text>
<text x="36.9" y="274.0" font-size="11.5" fill="#000" textLength="87.7" lengthAdjust="spacingAndGlyphs" font-family="Liberation Sans, sans-serif">MATRIX-8X8-RED</text>
<text x="58" y="669" font-size="13" fill="#000" textLength="8.5" lengthAdjust="spacingAndGlyphs" font-family="Liberation Sans, sans-serif">0°</text>
<text x="337.2" y="671" font-size="13" fill="#8c8c86" textLength="65.0" lengthAdjust="spacingAndGlyphs" font-family="Liberation Sans, sans-serif">No Messages</text>
<text x="427.5" y="671" font-size="13" fill="#000" textLength="429.5" lengthAdjust="spacingAndGlyphs" font-family="Liberation Sans, sans-serif">COMPONENT &lt;UNNAMED&gt;, Value=&lt;NONE&gt;, Module=&lt;NONE&gt;. Device=MATRIX-8X8-G</text>
<text x="888.8" y="671" font-size="13" fill="#000" textLength="32.2" lengthAdjust="spacingAndGlyphs" font-family="Liberation Sans, sans-serif">+500.0</text>
<text x="931.8" y="671" font-size="13" fill="#000" textLength="38.2" lengthAdjust="spacingAndGlyphs" font-family="Liberation Sans, sans-serif">+1200.0</text>
<text x="987.5" y="671" font-size="13" fill="#10108a" textLength="8.5" lengthAdjust="spacingAndGlyphs" font-family="Liberation Sans, sans-serif">th</text>
<text x="35.2" y="729.5" font-size="18.5" fill="#1f5a1f" textLength="38.3" lengthAdjust="spacingAndGlyphs" font-weight="bold" font-style="italic" font-family="Liberation Sans, sans-serif">start</text>
<text x="34.2" y="728.5" font-size="18.5" fill="#fff" textLength="38.3" lengthAdjust="spacingAndGlyphs" font-weight="bold" font-style="italic" font-family="Liberation Sans, sans-serif">start</text>
<text x="210" y="727" font-size="11" fill="#fff" textLength="63.5" lengthAdjust="spacingAndGlyphs" font-family="DejaVu Sans Condensed, DejaVu Sans, Liberation Sans, sans-serif">My Computer</text>
<text x="371" y="727" font-size="11" fill="#fff" textLength="114.5" lengthAdjust="spacingAndGlyphs" font-family="DejaVu Sans Condensed, DejaVu Sans, Liberation Sans, sans-serif">Điện tử Việt Nam - Re…</text>
<text x="530.8" y="727" font-size="11" fill="#fff" textLength="113.7" lengthAdjust="spacingAndGlyphs" font-family="DejaVu Sans Condensed, DejaVu Sans, Liberation Sans, sans-serif">Tải file từ máy - Điện …</text>
<text x="691.5" y="727" font-size="11" fill="#fff" textLength="114.0" lengthAdjust="spacingAndGlyphs" font-family="DejaVu Sans Condensed, DejaVu Sans, Liberation Sans, sans-serif">3 matrix - ISIS Profes…</text>
<text x="961.8" y="723" font-size="11" fill="#fff" textLength="40.0" lengthAdjust="spacingAndGlyphs" font-family="DejaVu Sans Condensed, DejaVu Sans, Liberation Sans, sans-serif">9:09 AM</text>
<text x="963.5" y="742.2" font-size="11" fill="#fff" textLength="35.0" lengthAdjust="spacingAndGlyphs" font-family="DejaVu Sans Condensed, DejaVu Sans, Liberation Sans, sans-serif">Sunday</text>
<text x="956.8" y="761" font-size="11" fill="#fff" textLength="49.2" lengthAdjust="spacingAndGlyphs" font-family="DejaVu Sans Condensed, DejaVu Sans, Liberation Sans, sans-serif">8/22/2010</text>
<!--TEXTS-->
</svg>
</body></html>
